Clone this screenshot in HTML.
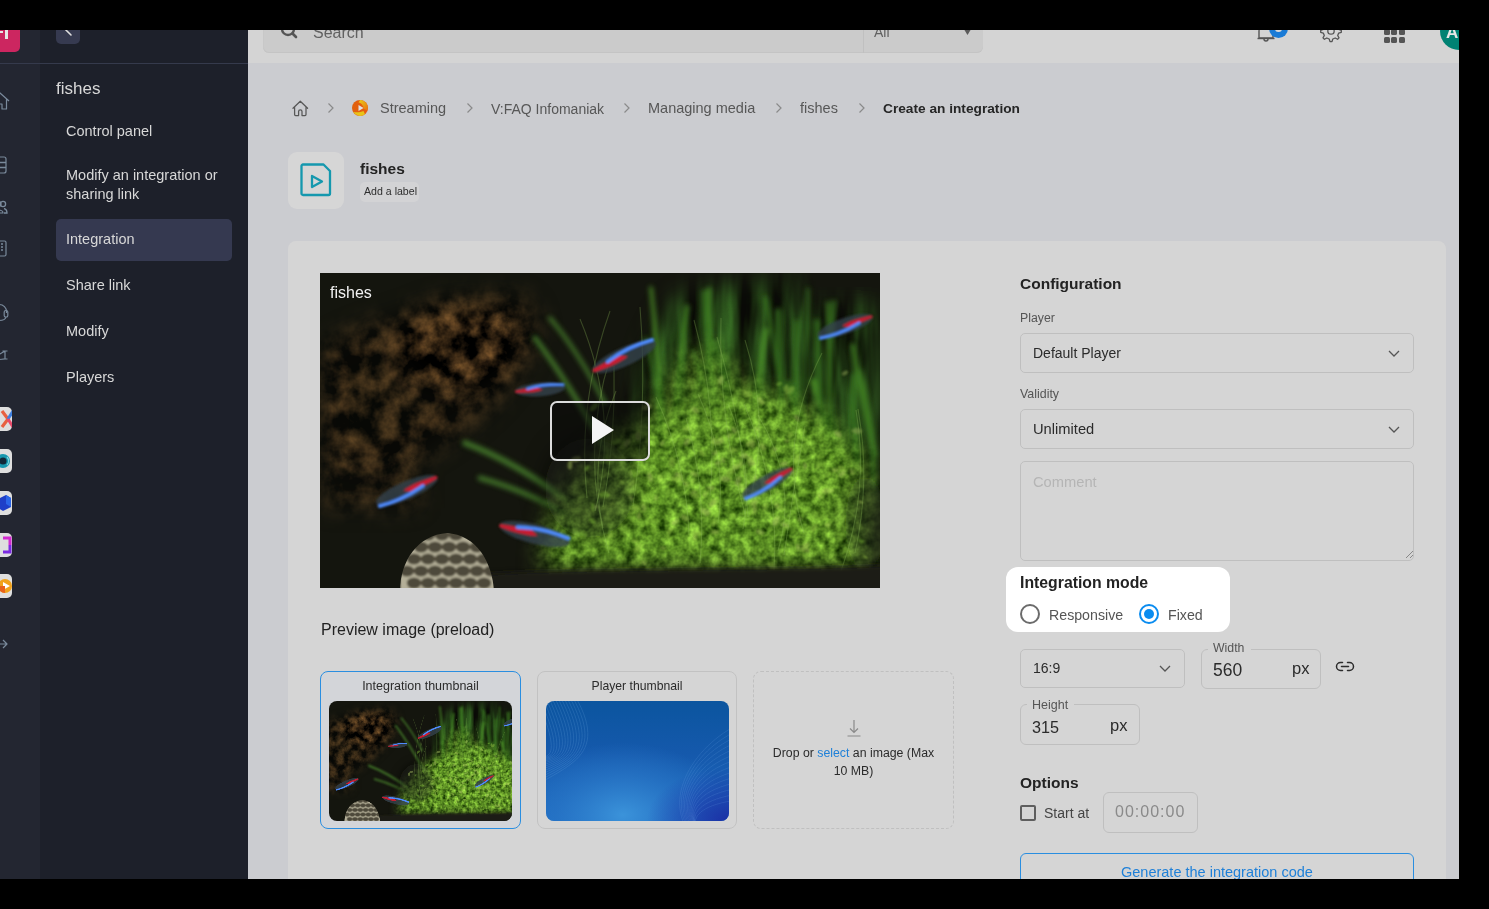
<!DOCTYPE html>
<html><head><meta charset="utf-8">
<style>
*{box-sizing:border-box;margin:0;padding:0}
html,body{width:1489px;height:909px;background:#000;overflow:hidden;font-family:"Liberation Sans",sans-serif;-webkit-font-smoothing:antialiased}
#app{position:absolute;left:0;top:30px;width:1459px;height:849px;overflow:hidden;background:#cbccd0}
.a{will-change:transform}
.a{position:absolute;white-space:nowrap}
svg.a{overflow:visible}
</style></head><body>
<div id="app">
<div class="a" style="left:0px;top:0px;width:40px;height:849px;background:#232631"></div>
<div class="a" style="left:40px;top:0px;width:208px;height:849px;background:#1d202a"></div>
<div class="a" style="left:0px;top:33px;width:248px;height:1px;background:#353a4c"></div>
<div class="a" style="left:-20px;top:-18px;width:40px;height:40px;background:#cc2660;border-radius:5px"></div>
<div class="a" style="left:-4px;top:1px;width:7px;height:2px;background:#e6e6e6"></div>
<div class="a" style="left:5px;top:0px;width:3px;height:9px;background:#e6e6e6"></div>
<div class="a" style="left:56px;top:-12px;width:24px;height:26px;background:#363a50;border-radius:5px"></div>
<svg class="a" style="left:62px;top:-8px;" width="14" height="16" viewBox="0 0 14 16"><path d="M9 3 L4 8 L9 13" fill="none" stroke="#e0e0e0" stroke-width="1.6" stroke-linecap="round"/></svg>
<svg class="a" style="left:-10px;top:62px;" width="20" height="18" viewBox="0 0 20 18"><path d="M1 9 L10 1 L19 9 M3.5 7 V17 H8 V12 H12 V17 H16.5 V7" fill="none" stroke="#7a8a9c" stroke-width="1.2" stroke-linejoin="round"/></svg>
<svg class="a" style="left:-8px;top:126px;" width="15" height="18" viewBox="0 0 15 18"><rect x="1" y="1" width="13" height="16" rx="2" fill="none" stroke="#7a8a9c" stroke-width="1.2"/><path d="M1 6.5 H14 M1 11.5 H14" stroke="#7a8a9c" stroke-width="1.3"/><circle cx="4" cy="4" r=".8" fill="#7a8a9c"/><circle cx="4" cy="9" r=".8" fill="#7a8a9c"/><circle cx="4" cy="14" r=".8" fill="#7a8a9c"/></svg>
<svg class="a" style="left:-8px;top:170px;" width="16" height="14" viewBox="0 0 16 14"><circle cx="6" cy="4" r="3" fill="none" stroke="#7a8a9c" stroke-width="1.2"/><path d="M1 13 C1 9 11 9 11 13 Z" fill="none" stroke="#7a8a9c" stroke-width="1.2"/><circle cx="11" cy="4" r="2.6" fill="none" stroke="#7a8a9c" stroke-width="1.3"/><path d="M12 8.5 C14 9 15 10.5 15 13 H12" fill="none" stroke="#7a8a9c" stroke-width="1.3"/></svg>
<svg class="a" style="left:-8px;top:210px;" width="15" height="17" viewBox="0 0 15 17"><rect x="1" y="1" width="13" height="15" rx="1.5" fill="none" stroke="#7a8a9c" stroke-width="1.2"/><path d="M4 4h2M9 4h2M4 7h2M9 7h2M4 10h2M9 10h2" stroke="#7a8a9c" stroke-width="1.3"/></svg>
<svg class="a" style="left:-10px;top:273px;" width="20" height="20" viewBox="0 0 20 20"><path d="M2.5 10 V8.5 a7 7 0 0 1 14 0 V10" fill="none" stroke="#7a8a9c" stroke-width="1.2"/><rect x="14.2" y="7.5" width="3.6" height="6.5" rx="1.6" fill="none" stroke="#7a8a9c" stroke-width="1.2"/><path d="M16 14 C15.5 16.5 13 17.5 9 17.5" fill="none" stroke="#7a8a9c" stroke-width="1.2"/></svg>
<svg class="a" style="left:-10px;top:319px;" width="20" height="12" viewBox="0 0 20 12"><path d="M0 9 L5 3.5 L9 5.5 M4.5 7 L9 10.5 M15 2 V10 M12.5 2 H17.5 M12.5 10 H17.5 M9 5.5 L15 2 M9 10.5 L15 10" fill="none" stroke="#7a8a9c" stroke-width="1.2" stroke-linejoin="round"/></svg>
<div class="a" style="left:-12px;top:377px;width:24px;height:24px;background:#dedede;border-radius:5px;overflow:hidden"></div>
<svg class="a" style="left:-1px;top:377px;overflow:hidden" width="13" height="24" viewBox="-1 0 13 24"><path d="M2 4 L8 12 L2 20" fill="none" stroke="#e86040" stroke-width="3.2"/><path d="M8 12 L13 4" stroke="#3d7fe0" stroke-width="3"/><path d="M8 12 L13 20" stroke="#e84a6a" stroke-width="3"/></svg>
<div class="a" style="left:-12px;top:419px;width:24px;height:24px;background:#dedede;border-radius:5px;overflow:hidden"></div>
<svg class="a" style="left:-1px;top:419px;overflow:hidden" width="13" height="24" viewBox="-1 0 13 24"><circle cx="3" cy="12" r="7" fill="#1797ae"/><circle cx="3" cy="12" r="3.6" fill="#122838"/><path d="M7 8 a6 6 0 0 1 0 8" stroke="#7fd6e0" stroke-width="1.2" fill="none"/></svg>
<div class="a" style="left:-12px;top:461px;width:24px;height:24px;background:#dedede;border-radius:5px;overflow:hidden"></div>
<svg class="a" style="left:-1px;top:461px;overflow:hidden" width="13" height="24" viewBox="-1 0 13 24"><path d="M-2 8 L6 4 L11 7 L11 16 L3 20 L-2 17Z" fill="#1f3fc8"/><path d="M6 4 L11 7 L11 16 L6 13Z" fill="#2b66e8"/></svg>
<div class="a" style="left:-12px;top:503px;width:24px;height:24px;background:#dedede;border-radius:5px;overflow:hidden"></div>
<svg class="a" style="left:-1px;top:503px;overflow:hidden" width="13" height="24" viewBox="-1 0 13 24"><path d="M3 5 H10 V12" fill="none" stroke="#d22ad0" stroke-width="3"/><path d="M10 12 V19 H3" fill="none" stroke="#7a2ae0" stroke-width="3"/></svg>
<div class="a" style="left:-12px;top:544px;width:24px;height:24px;background:#dedede;border-radius:5px;overflow:hidden"></div>
<svg class="a" style="left:-1px;top:544px;overflow:hidden" width="13" height="24" viewBox="-1 0 13 24"><circle cx="5" cy="12" r="7" fill="#f2a21a"/><path d="M3 8 L10 12 L3 16Z" fill="#fff"/><path d="M-2 12 a7 7 0 0 0 7 7 V12Z" fill="#e8621a"/></svg>
<svg class="a" style="left:-10px;top:606px;" width="20" height="16" viewBox="0 0 20 16"><path d="M6 2 H2 V14 H6 M7 8 H17 M13 4 L17 8 L13 12" fill="none" stroke="#7a8a9c" stroke-width="1.2" stroke-linejoin="round"/></svg>
<div class="a " style="left:56.0px;top:50.2px;font-size:17px;line-height:17px;color:#d8d8d8;font-weight:400;">fishes</div>
<div class="a " style="left:65.5px;top:94.2px;font-size:14.5px;line-height:14.5px;color:#d8d8d8;font-weight:400;">Control panel</div>
<div class="a " style="left:65.5px;top:137.8px;font-size:14.5px;line-height:14.5px;color:#d8d8d8;font-weight:400;">Modify an integration or</div>
<div class="a " style="left:65.5px;top:157.0px;font-size:14.5px;line-height:14.5px;color:#d8d8d8;font-weight:400;">sharing link</div>
<div class="a" style="left:56px;top:189px;width:176px;height:42px;background:#353950;border-radius:5px"></div>
<div class="a " style="left:65.5px;top:201.8px;font-size:14.5px;line-height:14.5px;color:#d8d8d8;font-weight:400;">Integration</div>
<div class="a " style="left:65.5px;top:247.7px;font-size:14.5px;line-height:14.5px;color:#d8d8d8;font-weight:400;">Share link</div>
<div class="a " style="left:65.5px;top:293.7px;font-size:14.5px;line-height:14.5px;color:#d8d8d8;font-weight:400;">Modify</div>
<div class="a " style="left:65.5px;top:339.7px;font-size:14.5px;line-height:14.5px;color:#d8d8d8;font-weight:400;">Players</div>
<div class="a" style="left:248px;top:0px;width:1211px;height:33px;background:#d4d4d4"></div>
<div class="a" style="left:263px;top:-18px;width:720px;height:41px;background:#cbcbcb;border-radius:6px;box-shadow:inset 0 -1px 0 #c4c4c4, inset 1px 0 0 #c8c8c8"></div>
<div class="a" style="left:863px;top:-18px;width:1px;height:41px;background:#c0c0c0"></div>
<svg class="a" style="left:279px;top:-10px;" width="20" height="20" viewBox="0 0 20 20"><circle cx="9" cy="9" r="6" fill="none" stroke="#555" stroke-width="2.4"/><path d="M13.5 13.5 L17 17" stroke="#555" stroke-width="2.6" stroke-linecap="round"/></svg>
<div class="a " style="left:313.4px;top:-5.5px;font-size:16px;line-height:16px;color:#616161;font-weight:400;">Search</div>
<div class="a " style="left:874.2px;top:-5.1px;font-size:14px;line-height:14px;color:#616161;font-weight:400;">All</div>
<svg class="a" style="left:962px;top:-4px;" width="12" height="10" viewBox="0 0 12 10"><path d="M0 0 H11 L5.5 9Z" fill="#5a5a5a"/></svg>
<svg class="a" style="left:1256px;top:-12px;" width="20" height="26" viewBox="0 0 20 26"><path d="M3 20 V13 a7 7 0 0 1 14 0 V20 Z" fill="none" stroke="#555" stroke-width="1.4" stroke-linejoin="round"/><path d="M1.5 20.5 H18.5" stroke="#555" stroke-width="1.4"/><path d="M8 21 a2 2 0 0 0 4 0" fill="none" stroke="#555" stroke-width="1.4"/></svg>
<div class="a" style="left:1269px;top:-11px;width:19px;height:19px;background:#1a7bd6;border-radius:50%"></div>
<div class="a" style="left:1275px;top:-5px;width:7px;height:7px;border:2px solid #d8d8d8;border-radius:50%"></div>
<svg class="a" style="left:1318px;top:-12px;" width="24" height="24" viewBox="0 0 24 24"><path d="M12 3 l2 0 l.8 2.6 l2.4 1 l2.4-1.3 l1.4 1.4 l-1.3 2.4 l1 2.4 l2.6.8 v2 l-2.6.8 l-1 2.4 l1.3 2.4 l-1.4 1.4 l-2.4-1.3 l-2.4 1 l-.8 2.6 h-2 l-.8-2.6 l-2.4-1 l-2.4 1.3 l-1.4-1.4 l1.3-2.4 l-1-2.4 l-2.6-.8 v-2 l2.6-.8 l1-2.4 l-1.3-2.4 l1.4-1.4 l2.4 1.3 l2.4-1 l.8-2.6Z" fill="none" stroke="#555" stroke-width="1.3" stroke-linejoin="round"/><circle cx="13" cy="13" r="3.2" fill="none" stroke="#555" stroke-width="1.3"/></svg>
<div class="a" style="left:1384.0px;top:-8.0px;width:5.5px;height:5.5px;background:#555;border-radius:1.5px"></div>
<div class="a" style="left:1384.0px;top:-0.7px;width:5.5px;height:5.5px;background:#555;border-radius:1.5px"></div>
<div class="a" style="left:1384.0px;top:6.6px;width:5.5px;height:5.5px;background:#555;border-radius:1.5px"></div>
<div class="a" style="left:1391.3px;top:-8.0px;width:5.5px;height:5.5px;background:#555;border-radius:1.5px"></div>
<div class="a" style="left:1391.3px;top:-0.7px;width:5.5px;height:5.5px;background:#555;border-radius:1.5px"></div>
<div class="a" style="left:1391.3px;top:6.6px;width:5.5px;height:5.5px;background:#555;border-radius:1.5px"></div>
<div class="a" style="left:1398.6px;top:-8.0px;width:5.5px;height:5.5px;background:#555;border-radius:1.5px"></div>
<div class="a" style="left:1398.6px;top:-0.7px;width:5.5px;height:5.5px;background:#555;border-radius:1.5px"></div>
<div class="a" style="left:1398.6px;top:6.6px;width:5.5px;height:5.5px;background:#555;border-radius:1.5px"></div>
<div class="a" style="left:1440px;top:-18px;width:38px;height:38px;background:#008273;border-radius:50%"></div>
<div class="a " style="left:1446.0px;top:-5.9px;font-size:17px;line-height:17px;color:#e6e6e6;font-weight:700;">A</div>
<div class="a" style="left:248px;top:33px;width:1211px;height:816px;background:#cbccd0"></div>
<svg class="a" style="left:292px;top:70px;" width="17" height="17" viewBox="0 0 17 17"><path d="M1 8.3 L8.3 1.2 L15.6 8.3 M2.6 6.8 V14.6 a1 1 0 0 0 1 1 H6.6 V11.6 a1.7 1.7 0 0 1 3.4 0 V15.6 H13 a1 1 0 0 0 1 -1 V6.8" fill="none" stroke="#575757" stroke-width="1.25" stroke-linejoin="round" stroke-linecap="round"/></svg>
<svg class="a" style="left:327px;top:71.5px;" width="8" height="12" viewBox="0 0 8 12"><path d="M1.5 1.5 L6 6 L1.5 10.5" fill="none" stroke="#8a8a8a" stroke-width="1.2"/></svg>
<svg class="a" style="left:466px;top:71.5px;" width="8" height="12" viewBox="0 0 8 12"><path d="M1.5 1.5 L6 6 L1.5 10.5" fill="none" stroke="#8a8a8a" stroke-width="1.2"/></svg>
<svg class="a" style="left:623px;top:71.5px;" width="8" height="12" viewBox="0 0 8 12"><path d="M1.5 1.5 L6 6 L1.5 10.5" fill="none" stroke="#8a8a8a" stroke-width="1.2"/></svg>
<svg class="a" style="left:775px;top:71.5px;" width="8" height="12" viewBox="0 0 8 12"><path d="M1.5 1.5 L6 6 L1.5 10.5" fill="none" stroke="#8a8a8a" stroke-width="1.2"/></svg>
<svg class="a" style="left:857.5px;top:71.5px;" width="8" height="12" viewBox="0 0 8 12"><path d="M1.5 1.5 L6 6 L1.5 10.5" fill="none" stroke="#8a8a8a" stroke-width="1.2"/></svg>
<svg class="a" style="left:351px;top:69px;" width="18" height="18" viewBox="0 0 18 18"><defs><linearGradient id="sg1" x1="0" y1="0" x2="1" y2="0"><stop offset="0" stop-color="#e0620e"/><stop offset="1" stop-color="#e85a10"/></linearGradient><linearGradient id="sg2" x1="0" y1="0" x2="1" y2="1"><stop offset="0" stop-color="#e8d018"/><stop offset="1" stop-color="#e87010"/></linearGradient></defs><circle cx="9" cy="9" r="8" fill="url(#sg1)"/><path d="M9 1 A8 8 0 0 1 16.5 11.5 L13 10 C12 6 10 4 7.6 3.6Z" fill="url(#sg2)"/><path d="M2.2 13 A8 8 0 0 0 14 15.2 L12.5 12 C10 13.2 6 13.5 2.2 13Z" fill="#e8c418"/><path d="M7.5 6 L12.6 9 L7.5 12Z" fill="#e2e2e2"/></svg>
<div class="a " style="left:380.3px;top:71.2px;font-size:14.5px;line-height:14.5px;color:#575757;font-weight:400;">Streaming</div>
<div class="a " style="left:490.8px;top:71.6px;font-size:14px;line-height:14px;color:#575757;font-weight:400;">V:FAQ Infomaniak</div>
<div class="a " style="left:648.2px;top:71.2px;font-size:14.5px;line-height:14.5px;color:#575757;font-weight:400;">Managing media</div>
<div class="a " style="left:800.0px;top:71.2px;font-size:14.5px;line-height:14.5px;color:#575757;font-weight:400;">fishes</div>
<div class="a " style="left:882.9px;top:71.9px;font-size:13.7px;line-height:13.7px;color:#262626;font-weight:700;">Create an integration</div>
<div class="a" style="left:288px;top:122px;width:56px;height:57px;background:#d6d6d6;border-radius:9px"></div>
<svg class="a" style="left:300px;top:133px;" width="32" height="34" viewBox="0 0 32 34"><path d="M3 1.5 H23.5 L30 8 V30.5 a1.5 1.5 0 0 1 -1.5 1.5 H3 a1.5 1.5 0 0 1 -1.5 -1.5 V3 a1.5 1.5 0 0 1 1.5 -1.5Z" fill="none" stroke="#1598ae" stroke-width="2.3" stroke-linejoin="round"/><path d="M12 13 L22 18.5 L12 24Z" fill="none" stroke="#1598ae" stroke-width="2.3" stroke-linejoin="round"/></svg>
<div class="a " style="left:360.0px;top:130.8px;font-size:15.5px;line-height:15.5px;color:#232323;font-weight:700;">fishes</div>
<div class="a" style="left:360px;top:152px;width:59px;height:20px;background:#d3d3d5;border-radius:5px"></div>
<div class="a " style="left:364.3px;top:156.2px;font-size:10.6px;line-height:10.6px;color:#2e2e2e;font-weight:400;">Add a label</div>
<div class="a" style="left:288px;top:211px;width:1158px;height:699px;background:#d5d5d5;border-radius:8px"></div>
<svg class="a" style="left:320px;top:243px;overflow:hidden" width="560" height="315" viewBox="0 0 560 315"><defs><filter id="vb12" x="-50%" y="-50%" width="200%" height="200%"><feGaussianBlur stdDeviation="12"/></filter><filter id="vb8" x="-50%" y="-50%" width="200%" height="200%"><feGaussianBlur stdDeviation="8"/></filter><filter id="vb6" x="-50%" y="-50%" width="200%" height="200%"><feGaussianBlur stdDeviation="6"/></filter><filter id="vb3" x="-50%" y="-50%" width="200%" height="200%"><feGaussianBlur stdDeviation="2.6"/></filter><filter id="vb2" x="-50%" y="-50%" width="200%" height="200%"><feGaussianBlur stdDeviation="1.6"/></filter><filter id="vb1" x="-50%" y="-50%" width="200%" height="200%"><feGaussianBlur stdDeviation="0.8"/></filter><filter id="vtp" x="0" y="0" width="100%" height="100%" color-interpolation-filters="sRGB"><feTurbulence type="fractalNoise" baseFrequency="0.095" numOctaves="3" seed="4"/><feColorMatrix type="matrix" values="0.8 0 0 0 -0.04  1.0 0 0 0 0.06  0.4 0 0 0 -0.06  0 0 0 0 1"/></filter><filter id="vtg" x="0" y="0" width="100%" height="100%" color-interpolation-filters="sRGB"><feTurbulence type="fractalNoise" baseFrequency="0.06 0.01" numOctaves="3" seed="2"/><feColorMatrix type="matrix" values="0.5 0 0 0 -0.12  1.05 0 0 0 -0.24  0.35 0 0 0 -0.1  0 0 0 0 1"/></filter><filter id="vtw" x="0" y="0" width="100%" height="100%" color-interpolation-filters="sRGB"><feTurbulence type="fractalNoise" baseFrequency="0.05" numOctaves="4" seed="9"/><feColorMatrix type="matrix" values="0.95 0 0 0 -0.3  0.66 0 0 0 -0.21  0.34 0 0 0 -0.11  0 0 0 0 1"/></filter><mask id="vmp"><g filter="url(#vb12)"><path d="M228 255 C245 200 290 160 340 140 C365 115 400 100 435 115 C485 130 540 160 550 210 L552 296 L222 296Z" fill="#fff"/><path d="M330 150 C345 100 370 70 395 75 C415 85 420 110 425 125Z" fill="#999"/></g></mask><mask id="vmg"><g filter="url(#vb12)"><path d="M350 30 C390 5 470 5 545 15 L560 30 L560 230 L300 220 C300 150 320 80 350 30Z" fill="#8c8c8c"/><path d="M470 -10 L570 -10 L570 40 L470 40Z" fill="#000"/></g></mask><mask id="vmw"><g filter="url(#vb12)"><path d="M0 75 C40 50 110 30 190 22 C220 25 225 55 205 90 C185 125 140 170 70 200 L0 215Z" fill="#9a9a9a"/><ellipse cx="140" cy="70" rx="60" ry="42" fill="#fff"/><path d="M0 195 L100 195 L100 235 L0 235Z" fill="#777"/></g></mask></defs><rect width="560" height="315" fill="#14150e"/><g mask="url(#vmw)"><rect width="560" height="315" filter="url(#vtw)"/></g><g mask="url(#vmg)"><rect width="560" height="315" filter="url(#vtg)"/></g><g filter="url(#vb3)" opacity=".75"><path d="M434 195 Q434 126 446 57" stroke="#54a02c" stroke-width="4.5" fill="none" stroke-linecap="round"/><path d="M515 188 Q506 108 514 29" stroke="#3a7a20" stroke-width="4.3" fill="none" stroke-linecap="round"/><path d="M516 205 Q509 157 493 108" stroke="#54a02c" stroke-width="5.9" fill="none" stroke-linecap="round"/><path d="M480 200 Q486 108 488 16" stroke="#3a7a20" stroke-width="3.1" fill="none" stroke-linecap="round"/><path d="M509 176 Q508 103 508 30" stroke="#468c26" stroke-width="3.7" fill="none" stroke-linecap="round"/><path d="M482 187 Q480 148 468 110" stroke="#3a7a20" stroke-width="6.0" fill="none" stroke-linecap="round"/><path d="M403 168 Q388 93 389 17" stroke="#468c26" stroke-width="5.3" fill="none" stroke-linecap="round"/><path d="M397 155 Q384 117 373 78" stroke="#3a7a20" stroke-width="3.6" fill="none" stroke-linecap="round"/><path d="M555 182 Q541 127 533 73" stroke="#468c26" stroke-width="5.3" fill="none" stroke-linecap="round"/><path d="M402 151 Q389 127 393 102" stroke="#54a02c" stroke-width="3.4" fill="none" stroke-linecap="round"/><path d="M344 214 Q345 140 326 66" stroke="#3a7a20" stroke-width="4.3" fill="none" stroke-linecap="round"/><path d="M507 184 Q498 117 497 49" stroke="#3a7a20" stroke-width="6.0" fill="none" stroke-linecap="round"/><path d="M553 214 Q557 156 540 98" stroke="#468c26" stroke-width="3.6" fill="none" stroke-linecap="round"/><path d="M468 196 Q462 110 445 25" stroke="#3a7a20" stroke-width="4.3" fill="none" stroke-linecap="round"/><path d="M406 174 Q385 96 384 19" stroke="#3a7a20" stroke-width="4.7" fill="none" stroke-linecap="round"/><path d="M415 200 Q412 134 395 69" stroke="#3a7a20" stroke-width="5.5" fill="none" stroke-linecap="round"/><path d="M372 162 Q371 127 383 92" stroke="#3a7a20" stroke-width="3.7" fill="none" stroke-linecap="round"/><path d="M475 194 Q474 122 477 49" stroke="#3a7a20" stroke-width="4.4" fill="none" stroke-linecap="round"/><path d="M354 153 Q359 93 367 34" stroke="#468c26" stroke-width="5.1" fill="none" stroke-linecap="round"/><path d="M538 189 Q531 146 534 103" stroke="#3a7a20" stroke-width="5.9" fill="none" stroke-linecap="round"/><path d="M459 218 Q463 128 458 38" stroke="#3a7a20" stroke-width="5.8" fill="none" stroke-linecap="round"/><path d="M346 183 Q340 99 331 15" stroke="#54a02c" stroke-width="3.8" fill="none" stroke-linecap="round"/><path d="M215 65 Q252.5 115.0 290 185" stroke="#4f9030" stroke-width="5" fill="none" stroke-linecap="round"/><path d="M145 170 Q197.5 190.0 250 230" stroke="#4f9030" stroke-width="6" fill="none" stroke-linecap="round"/><path d="M160 205 Q215.0 220.0 270 255" stroke="#4f9030" stroke-width="5" fill="none" stroke-linecap="round"/><path d="M230 45 Q257.5 77.5 285 130" stroke="#4f9030" stroke-width="4" fill="none" stroke-linecap="round"/></g><g mask="url(#vmp)"><rect width="560" height="315" filter="url(#vtp)"/></g><g filter="url(#vb12)"><ellipse cx="270" cy="215" rx="45" ry="50" fill="#14150e" opacity=".55"/><ellipse cx="545" cy="250" rx="20" ry="50" fill="#14150e" opacity=".5"/></g><g filter="url(#vb1)" opacity=".45"><ellipse cx="456" cy="248" rx="5.4" ry="3.0" transform="rotate(118 456 248)" fill="#a4b860"/><ellipse cx="367" cy="156" rx="4.3" ry="2.3" transform="rotate(166 367 156)" fill="#9cc84a"/><ellipse cx="331" cy="222" rx="5.4" ry="3.0" transform="rotate(4 331 222)" fill="#7db834"/><ellipse cx="345" cy="173" rx="3.5" ry="1.9" transform="rotate(180 345 173)" fill="#7db834"/><ellipse cx="495" cy="242" rx="5.2" ry="2.9" transform="rotate(133 495 242)" fill="#8cc43c"/><ellipse cx="364" cy="133" rx="3.6" ry="2.0" transform="rotate(123 364 133)" fill="#7db834"/><ellipse cx="537" cy="158" rx="5.3" ry="2.9" transform="rotate(5 537 158)" fill="#a4b860"/><ellipse cx="391" cy="215" rx="3.6" ry="2.0" transform="rotate(2 391 215)" fill="#a4b860"/><ellipse cx="436" cy="224" rx="5.5" ry="3.0" transform="rotate(158 436 224)" fill="#8cc43c"/><ellipse cx="394" cy="168" rx="3.9" ry="2.1" transform="rotate(83 394 168)" fill="#b4d060"/><ellipse cx="311" cy="200" rx="2.6" ry="1.4" transform="rotate(108 311 200)" fill="#b4d060"/><ellipse cx="348" cy="219" rx="4.0" ry="2.2" transform="rotate(111 348 219)" fill="#8cc43c"/><ellipse cx="459" cy="197" rx="3.6" ry="2.0" transform="rotate(26 459 197)" fill="#8cc43c"/><ellipse cx="331" cy="178" rx="4.5" ry="2.5" transform="rotate(80 331 178)" fill="#7db834"/><ellipse cx="460" cy="188" rx="3.1" ry="1.7" transform="rotate(78 460 188)" fill="#7db834"/><ellipse cx="466" cy="115" rx="3.7" ry="2.0" transform="rotate(105 466 115)" fill="#9cc84a"/><ellipse cx="387" cy="239" rx="3.6" ry="2.0" transform="rotate(161 387 239)" fill="#a4b860"/><ellipse cx="433" cy="219" rx="5.0" ry="2.7" transform="rotate(20 433 219)" fill="#7db834"/><ellipse cx="443" cy="174" rx="4.0" ry="2.2" transform="rotate(57 443 174)" fill="#b4d060"/><ellipse cx="525" cy="100" rx="3.5" ry="1.9" transform="rotate(149 525 100)" fill="#a4b860"/><ellipse cx="386" cy="280" rx="4.2" ry="2.3" transform="rotate(56 386 280)" fill="#7db834"/><ellipse cx="409" cy="206" rx="3.7" ry="2.0" transform="rotate(34 409 206)" fill="#9cc84a"/><ellipse cx="413" cy="177" rx="4.9" ry="2.7" transform="rotate(177 413 177)" fill="#9cc84a"/><ellipse cx="434" cy="230" rx="4.5" ry="2.5" transform="rotate(145 434 230)" fill="#b4d060"/><ellipse cx="522" cy="196" rx="5.0" ry="2.7" transform="rotate(46 522 196)" fill="#9cc84a"/><ellipse cx="375" cy="137" rx="4.6" ry="2.6" transform="rotate(32 375 137)" fill="#b4d060"/><ellipse cx="395" cy="259" rx="4.0" ry="2.2" transform="rotate(179 395 259)" fill="#b4d060"/><ellipse cx="489" cy="294" rx="2.8" ry="1.5" transform="rotate(168 489 294)" fill="#9cc84a"/><ellipse cx="398" cy="190" rx="3.1" ry="1.7" transform="rotate(160 398 190)" fill="#a4b860"/><ellipse cx="506" cy="218" rx="4.9" ry="2.7" transform="rotate(170 506 218)" fill="#b4d060"/><ellipse cx="292" cy="231" rx="2.8" ry="1.5" transform="rotate(156 292 231)" fill="#9cc84a"/><ellipse cx="459" cy="111" rx="3.1" ry="1.7" transform="rotate(162 459 111)" fill="#8cc43c"/><ellipse cx="267" cy="195" rx="3.3" ry="1.8" transform="rotate(129 267 195)" fill="#7db834"/><ellipse cx="499" cy="221" rx="3.8" ry="2.1" transform="rotate(99 499 221)" fill="#8cc43c"/><ellipse cx="416" cy="160" rx="3.2" ry="1.7" transform="rotate(156 416 160)" fill="#8cc43c"/><ellipse cx="386" cy="221" rx="3.5" ry="1.9" transform="rotate(142 386 221)" fill="#b4d060"/><ellipse cx="434" cy="236" rx="5.2" ry="2.9" transform="rotate(93 434 236)" fill="#b4d060"/><ellipse cx="367" cy="169" rx="4.2" ry="2.3" transform="rotate(124 367 169)" fill="#a4b860"/><ellipse cx="409" cy="163" rx="3.4" ry="1.9" transform="rotate(131 409 163)" fill="#b4d060"/><ellipse cx="342" cy="170" rx="3.3" ry="1.8" transform="rotate(121 342 170)" fill="#b4d060"/><ellipse cx="352" cy="189" rx="5.4" ry="3.0" transform="rotate(94 352 189)" fill="#9cc84a"/><ellipse cx="357" cy="201" rx="2.8" ry="1.6" transform="rotate(1 357 201)" fill="#b4d060"/><ellipse cx="334" cy="257" rx="4.0" ry="2.2" transform="rotate(72 334 257)" fill="#8cc43c"/><ellipse cx="437" cy="156" rx="2.8" ry="1.5" transform="rotate(30 437 156)" fill="#a4b860"/><ellipse cx="485" cy="193" rx="3.3" ry="1.8" transform="rotate(85 485 193)" fill="#a4b860"/><ellipse cx="465" cy="252" rx="4.1" ry="2.2" transform="rotate(20 465 252)" fill="#a4b860"/><ellipse cx="388" cy="221" rx="2.9" ry="1.6" transform="rotate(140 388 221)" fill="#7db834"/><ellipse cx="457" cy="219" rx="2.5" ry="1.4" transform="rotate(51 457 219)" fill="#9cc84a"/><ellipse cx="395" cy="180" rx="2.8" ry="1.5" transform="rotate(132 395 180)" fill="#a4b860"/><ellipse cx="474" cy="255" rx="4.7" ry="2.6" transform="rotate(126 474 255)" fill="#7db834"/><ellipse cx="418" cy="208" rx="5.0" ry="2.7" transform="rotate(111 418 208)" fill="#a4b860"/><ellipse cx="250" cy="192" rx="4.4" ry="2.4" transform="rotate(95 250 192)" fill="#b4d060"/><ellipse cx="470" cy="162" rx="3.2" ry="1.8" transform="rotate(133 470 162)" fill="#9cc84a"/><ellipse cx="469" cy="119" rx="4.3" ry="2.4" transform="rotate(160 469 119)" fill="#7db834"/><ellipse cx="452" cy="293" rx="5.2" ry="2.8" transform="rotate(24 452 293)" fill="#9cc84a"/><ellipse cx="414" cy="292" rx="3.7" ry="2.0" transform="rotate(78 414 292)" fill="#7db834"/><ellipse cx="498" cy="193" rx="3.1" ry="1.7" transform="rotate(113 498 193)" fill="#9cc84a"/><ellipse cx="416" cy="194" rx="4.5" ry="2.5" transform="rotate(164 416 194)" fill="#b4d060"/><ellipse cx="444" cy="210" rx="4.4" ry="2.4" transform="rotate(62 444 210)" fill="#b4d060"/><ellipse cx="435" cy="163" rx="2.6" ry="1.4" transform="rotate(99 435 163)" fill="#8cc43c"/><ellipse cx="302" cy="209" rx="3.1" ry="1.7" transform="rotate(21 302 209)" fill="#9cc84a"/><ellipse cx="427" cy="240" rx="5.3" ry="2.9" transform="rotate(17 427 240)" fill="#7db834"/><ellipse cx="273" cy="234" rx="3.7" ry="2.0" transform="rotate(77 273 234)" fill="#7db834"/><ellipse cx="371" cy="241" rx="2.5" ry="1.4" transform="rotate(126 371 241)" fill="#7db834"/><ellipse cx="433" cy="190" rx="3.6" ry="2.0" transform="rotate(67 433 190)" fill="#a4b860"/><ellipse cx="501" cy="184" rx="4.0" ry="2.2" transform="rotate(3 501 184)" fill="#8cc43c"/><ellipse cx="518" cy="161" rx="4.2" ry="2.3" transform="rotate(34 518 161)" fill="#a4b860"/><ellipse cx="342" cy="193" rx="3.3" ry="1.8" transform="rotate(21 342 193)" fill="#7db834"/><ellipse cx="403" cy="187" rx="2.9" ry="1.6" transform="rotate(59 403 187)" fill="#a4b860"/><ellipse cx="330" cy="204" rx="4.8" ry="2.6" transform="rotate(73 330 204)" fill="#a4b860"/><ellipse cx="400" cy="197" rx="3.4" ry="1.9" transform="rotate(18 400 197)" fill="#7db834"/><ellipse cx="426" cy="206" rx="5.3" ry="2.9" transform="rotate(120 426 206)" fill="#7db834"/><ellipse cx="343" cy="275" rx="3.0" ry="1.7" transform="rotate(14 343 275)" fill="#b4d060"/><ellipse cx="312" cy="210" rx="4.6" ry="2.5" transform="rotate(137 312 210)" fill="#9cc84a"/><ellipse cx="422" cy="214" rx="2.8" ry="1.6" transform="rotate(43 422 214)" fill="#b4d060"/><ellipse cx="316" cy="235" rx="4.4" ry="2.4" transform="rotate(2 316 235)" fill="#9cc84a"/><ellipse cx="402" cy="253" rx="4.2" ry="2.3" transform="rotate(91 402 253)" fill="#7db834"/><ellipse cx="506" cy="202" rx="4.4" ry="2.4" transform="rotate(146 506 202)" fill="#8cc43c"/><ellipse cx="501" cy="245" rx="3.7" ry="2.0" transform="rotate(169 501 245)" fill="#8cc43c"/><ellipse cx="467" cy="168" rx="2.7" ry="1.5" transform="rotate(170 467 168)" fill="#b4d060"/><ellipse cx="319" cy="243" rx="3.4" ry="1.9" transform="rotate(95 319 243)" fill="#b4d060"/><ellipse cx="342" cy="219" rx="4.5" ry="2.5" transform="rotate(135 342 219)" fill="#7db834"/><ellipse cx="541" cy="229" rx="2.6" ry="1.4" transform="rotate(28 541 229)" fill="#b4d060"/><ellipse cx="407" cy="167" rx="4.7" ry="2.6" transform="rotate(9 407 167)" fill="#7db834"/><ellipse cx="323" cy="238" rx="2.6" ry="1.4" transform="rotate(18 323 238)" fill="#9cc84a"/><ellipse cx="470" cy="117" rx="5.4" ry="3.0" transform="rotate(147 470 117)" fill="#9cc84a"/><ellipse cx="374" cy="201" rx="3.8" ry="2.1" transform="rotate(21 374 201)" fill="#b4d060"/><ellipse cx="453" cy="180" rx="2.9" ry="1.6" transform="rotate(80 453 180)" fill="#9cc84a"/><ellipse cx="361" cy="169" rx="4.4" ry="2.4" transform="rotate(123 361 169)" fill="#7db834"/><ellipse cx="318" cy="275" rx="5.4" ry="2.9" transform="rotate(132 318 275)" fill="#9cc84a"/><ellipse cx="408" cy="239" rx="4.9" ry="2.7" transform="rotate(112 408 239)" fill="#7db834"/><ellipse cx="365" cy="245" rx="4.6" ry="2.5" transform="rotate(34 365 245)" fill="#b4d060"/><ellipse cx="394" cy="250" rx="4.0" ry="2.2" transform="rotate(118 394 250)" fill="#9cc84a"/><ellipse cx="445" cy="284" rx="2.5" ry="1.4" transform="rotate(47 445 284)" fill="#8cc43c"/><ellipse cx="427" cy="217" rx="4.1" ry="2.3" transform="rotate(13 427 217)" fill="#9cc84a"/><ellipse cx="508" cy="252" rx="3.2" ry="1.8" transform="rotate(177 508 252)" fill="#b4d060"/><ellipse cx="331" cy="220" rx="3.5" ry="1.9" transform="rotate(134 331 220)" fill="#7db834"/><ellipse cx="422" cy="199" rx="3.8" ry="2.1" transform="rotate(148 422 199)" fill="#8cc43c"/><ellipse cx="477" cy="145" rx="3.8" ry="2.1" transform="rotate(46 477 145)" fill="#a4b860"/><ellipse cx="433" cy="172" rx="3.5" ry="1.9" transform="rotate(99 433 172)" fill="#b4d060"/><ellipse cx="401" cy="107" rx="4.5" ry="2.5" transform="rotate(105 401 107)" fill="#a4b860"/><ellipse cx="336" cy="225" rx="2.7" ry="1.5" transform="rotate(102 336 225)" fill="#b4d060"/><ellipse cx="284" cy="222" rx="5.0" ry="2.7" transform="rotate(2 284 222)" fill="#7db834"/><ellipse cx="307" cy="170" rx="4.7" ry="2.6" transform="rotate(125 307 170)" fill="#a4b860"/><ellipse cx="396" cy="241" rx="4.5" ry="2.5" transform="rotate(59 396 241)" fill="#7db834"/><ellipse cx="464" cy="191" rx="4.2" ry="2.3" transform="rotate(165 464 191)" fill="#a4b860"/><ellipse cx="272" cy="248" rx="3.9" ry="2.1" transform="rotate(40 272 248)" fill="#7db834"/><ellipse cx="532" cy="199" rx="3.2" ry="1.8" transform="rotate(65 532 199)" fill="#b4d060"/><ellipse cx="355" cy="249" rx="4.3" ry="2.3" transform="rotate(143 355 249)" fill="#a4b860"/><ellipse cx="400" cy="169" rx="4.1" ry="2.3" transform="rotate(151 400 169)" fill="#a4b860"/><ellipse cx="359" cy="204" rx="5.1" ry="2.8" transform="rotate(51 359 204)" fill="#a4b860"/><ellipse cx="500" cy="223" rx="3.0" ry="1.6" transform="rotate(53 500 223)" fill="#b4d060"/><ellipse cx="312" cy="245" rx="4.9" ry="2.7" transform="rotate(15 312 245)" fill="#7db834"/><ellipse cx="519" cy="254" rx="2.8" ry="1.5" transform="rotate(114 519 254)" fill="#7db834"/><ellipse cx="487" cy="277" rx="3.2" ry="1.8" transform="rotate(40 487 277)" fill="#a4b860"/><ellipse cx="414" cy="157" rx="3.7" ry="2.0" transform="rotate(61 414 157)" fill="#a4b860"/><ellipse cx="522" cy="201" rx="4.0" ry="2.2" transform="rotate(145 522 201)" fill="#a4b860"/><ellipse cx="505" cy="244" rx="3.7" ry="2.1" transform="rotate(149 505 244)" fill="#8cc43c"/><ellipse cx="327" cy="134" rx="5.0" ry="2.8" transform="rotate(160 327 134)" fill="#a4b860"/><ellipse cx="515" cy="197" rx="3.6" ry="2.0" transform="rotate(2 515 197)" fill="#b4d060"/><ellipse cx="545" cy="284" rx="3.2" ry="1.8" transform="rotate(29 545 284)" fill="#9cc84a"/><ellipse cx="325" cy="160" rx="3.1" ry="1.7" transform="rotate(76 325 160)" fill="#7db834"/><ellipse cx="469" cy="230" rx="3.4" ry="1.9" transform="rotate(28 469 230)" fill="#8cc43c"/><ellipse cx="405" cy="206" rx="5.2" ry="2.9" transform="rotate(7 405 206)" fill="#a4b860"/><ellipse cx="445" cy="234" rx="4.3" ry="2.3" transform="rotate(108 445 234)" fill="#9cc84a"/><ellipse cx="311" cy="225" rx="3.1" ry="1.7" transform="rotate(51 311 225)" fill="#a4b860"/><ellipse cx="468" cy="286" rx="4.4" ry="2.4" transform="rotate(170 468 286)" fill="#7db834"/><ellipse cx="256" cy="186" rx="5.2" ry="2.8" transform="rotate(165 256 186)" fill="#a4b860"/><ellipse cx="350" cy="266" rx="3.9" ry="2.2" transform="rotate(40 350 266)" fill="#8cc43c"/><ellipse cx="430" cy="170" rx="4.9" ry="2.7" transform="rotate(139 430 170)" fill="#b4d060"/><ellipse cx="411" cy="199" rx="5.2" ry="2.8" transform="rotate(157 411 199)" fill="#9cc84a"/><ellipse cx="477" cy="186" rx="4.6" ry="2.6" transform="rotate(109 477 186)" fill="#9cc84a"/><ellipse cx="431" cy="238" rx="2.9" ry="1.6" transform="rotate(163 431 238)" fill="#7db834"/><ellipse cx="421" cy="191" rx="3.3" ry="1.8" transform="rotate(96 421 191)" fill="#b4d060"/><ellipse cx="485" cy="282" rx="3.1" ry="1.7" transform="rotate(165 485 282)" fill="#8cc43c"/><ellipse cx="430" cy="235" rx="3.3" ry="1.8" transform="rotate(129 430 235)" fill="#7db834"/><ellipse cx="480" cy="246" rx="2.7" ry="1.5" transform="rotate(135 480 246)" fill="#a4b860"/><ellipse cx="314" cy="200" rx="4.9" ry="2.7" transform="rotate(75 314 200)" fill="#8cc43c"/><ellipse cx="435" cy="205" rx="3.1" ry="1.7" transform="rotate(98 435 205)" fill="#a4b860"/><ellipse cx="359" cy="210" rx="3.4" ry="1.9" transform="rotate(73 359 210)" fill="#7db834"/><ellipse cx="390" cy="199" rx="4.6" ry="2.5" transform="rotate(19 390 199)" fill="#8cc43c"/><ellipse cx="335" cy="248" rx="4.5" ry="2.5" transform="rotate(2 335 248)" fill="#8cc43c"/><ellipse cx="315" cy="268" rx="3.4" ry="1.9" transform="rotate(20 315 268)" fill="#9cc84a"/><ellipse cx="427" cy="121" rx="5.2" ry="2.9" transform="rotate(27 427 121)" fill="#9cc84a"/><ellipse cx="274" cy="134" rx="5.4" ry="2.9" transform="rotate(136 274 134)" fill="#7db834"/><ellipse cx="373" cy="208" rx="3.1" ry="1.7" transform="rotate(132 373 208)" fill="#9cc84a"/><ellipse cx="287" cy="185" rx="3.8" ry="2.1" transform="rotate(69 287 185)" fill="#7db834"/><ellipse cx="494" cy="255" rx="4.5" ry="2.5" transform="rotate(127 494 255)" fill="#9cc84a"/><ellipse cx="440" cy="259" rx="4.3" ry="2.4" transform="rotate(16 440 259)" fill="#a4b860"/><ellipse cx="412" cy="243" rx="3.8" ry="2.1" transform="rotate(139 412 243)" fill="#8cc43c"/><ellipse cx="324" cy="290" rx="2.9" ry="1.6" transform="rotate(37 324 290)" fill="#b4d060"/><ellipse cx="478" cy="274" rx="3.5" ry="1.9" transform="rotate(74 478 274)" fill="#a4b860"/><ellipse cx="486" cy="220" rx="5.4" ry="3.0" transform="rotate(142 486 220)" fill="#7db834"/><ellipse cx="346" cy="159" rx="3.3" ry="1.8" transform="rotate(34 346 159)" fill="#8cc43c"/><ellipse cx="375" cy="264" rx="3.6" ry="2.0" transform="rotate(92 375 264)" fill="#b4d060"/><ellipse cx="441" cy="128" rx="4.6" ry="2.6" transform="rotate(46 441 128)" fill="#b4d060"/><ellipse cx="340" cy="205" rx="3.6" ry="2.0" transform="rotate(90 340 205)" fill="#9cc84a"/><ellipse cx="485" cy="274" rx="5.5" ry="3.0" transform="rotate(127 485 274)" fill="#b4d060"/><ellipse cx="500" cy="191" rx="4.4" ry="2.4" transform="rotate(36 500 191)" fill="#8cc43c"/><ellipse cx="457" cy="233" rx="3.8" ry="2.1" transform="rotate(60 457 233)" fill="#b4d060"/><ellipse cx="541" cy="268" rx="3.9" ry="2.1" transform="rotate(22 541 268)" fill="#7db834"/><ellipse cx="448" cy="211" rx="4.1" ry="2.3" transform="rotate(101 448 211)" fill="#b4d060"/><ellipse cx="347" cy="201" rx="4.3" ry="2.4" transform="rotate(22 347 201)" fill="#7db834"/><ellipse cx="435" cy="180" rx="3.2" ry="1.8" transform="rotate(103 435 180)" fill="#7db834"/><ellipse cx="430" cy="188" rx="4.9" ry="2.7" transform="rotate(82 430 188)" fill="#b4d060"/><ellipse cx="290" cy="263" rx="3.4" ry="1.9" transform="rotate(121 290 263)" fill="#9cc84a"/><ellipse cx="399" cy="168" rx="4.4" ry="2.4" transform="rotate(137 399 168)" fill="#b4d060"/><ellipse cx="450" cy="257" rx="2.9" ry="1.6" transform="rotate(70 450 257)" fill="#8cc43c"/><ellipse cx="360" cy="202" rx="2.9" ry="1.6" transform="rotate(44 360 202)" fill="#b4d060"/><ellipse cx="429" cy="208" rx="4.7" ry="2.6" transform="rotate(142 429 208)" fill="#8cc43c"/><ellipse cx="328" cy="247" rx="3.9" ry="2.2" transform="rotate(74 328 247)" fill="#8cc43c"/><ellipse cx="318" cy="163" rx="4.8" ry="2.6" transform="rotate(87 318 163)" fill="#a4b860"/><ellipse cx="455" cy="176" rx="2.9" ry="1.6" transform="rotate(21 455 176)" fill="#a4b860"/><ellipse cx="471" cy="199" rx="3.8" ry="2.1" transform="rotate(163 471 199)" fill="#b4d060"/><ellipse cx="393" cy="230" rx="5.2" ry="2.9" transform="rotate(132 393 230)" fill="#b4d060"/><ellipse cx="296" cy="169" rx="5.1" ry="2.8" transform="rotate(158 296 169)" fill="#7db834"/><ellipse cx="495" cy="206" rx="4.1" ry="2.2" transform="rotate(43 495 206)" fill="#8cc43c"/><ellipse cx="377" cy="260" rx="5.1" ry="2.8" transform="rotate(180 377 260)" fill="#9cc84a"/><ellipse cx="385" cy="118" rx="5.1" ry="2.8" transform="rotate(76 385 118)" fill="#7db834"/><ellipse cx="424" cy="183" rx="4.2" ry="2.3" transform="rotate(163 424 183)" fill="#a4b860"/><ellipse cx="521" cy="264" rx="5.1" ry="2.8" transform="rotate(104 521 264)" fill="#8cc43c"/><ellipse cx="341" cy="227" rx="2.6" ry="1.4" transform="rotate(31 341 227)" fill="#7db834"/><ellipse cx="324" cy="234" rx="3.7" ry="2.0" transform="rotate(64 324 234)" fill="#b4d060"/><ellipse cx="384" cy="207" rx="3.9" ry="2.1" transform="rotate(56 384 207)" fill="#8cc43c"/><ellipse cx="385" cy="239" rx="5.1" ry="2.8" transform="rotate(36 385 239)" fill="#a4b860"/><ellipse cx="483" cy="158" rx="3.1" ry="1.7" transform="rotate(151 483 158)" fill="#8cc43c"/><ellipse cx="350" cy="258" rx="4.4" ry="2.4" transform="rotate(126 350 258)" fill="#9cc84a"/><ellipse cx="313" cy="193" rx="3.1" ry="1.7" transform="rotate(158 313 193)" fill="#9cc84a"/><ellipse cx="441" cy="222" rx="5.4" ry="3.0" transform="rotate(49 441 222)" fill="#7db834"/><ellipse cx="261" cy="262" rx="4.6" ry="2.5" transform="rotate(169 261 262)" fill="#7db834"/><ellipse cx="374" cy="222" rx="5.1" ry="2.8" transform="rotate(22 374 222)" fill="#9cc84a"/><ellipse cx="382" cy="180" rx="4.0" ry="2.2" transform="rotate(53 382 180)" fill="#9cc84a"/><ellipse cx="366" cy="211" rx="3.2" ry="1.8" transform="rotate(54 366 211)" fill="#b4d060"/><ellipse cx="511" cy="183" rx="2.9" ry="1.6" transform="rotate(120 511 183)" fill="#7db834"/><ellipse cx="374" cy="219" rx="2.7" ry="1.5" transform="rotate(163 374 219)" fill="#b4d060"/><ellipse cx="511" cy="218" rx="3.3" ry="1.8" transform="rotate(145 511 218)" fill="#b4d060"/><ellipse cx="461" cy="235" rx="3.2" ry="1.8" transform="rotate(50 461 235)" fill="#9cc84a"/><ellipse cx="356" cy="206" rx="5.5" ry="3.0" transform="rotate(6 356 206)" fill="#9cc84a"/><ellipse cx="276" cy="234" rx="2.5" ry="1.4" transform="rotate(160 276 234)" fill="#a4b860"/></g><path d="M267 225 Q257 131 290 38" stroke="#90b858" stroke-width="1.1" fill="none" opacity=".3"/><path d="M390 223 Q398 135 374 47" stroke="#90b858" stroke-width="1.1" fill="none" opacity=".3"/><path d="M535 280 Q551 208 538 136" stroke="#90b858" stroke-width="1.1" fill="none" opacity=".3"/><path d="M283 255 Q268 186 296 118" stroke="#90b858" stroke-width="1.1" fill="none" opacity=".3"/><path d="M458 278 Q479 210 438 142" stroke="#90b858" stroke-width="1.1" fill="none" opacity=".3"/><path d="M425 241 Q398 143 401 45" stroke="#90b858" stroke-width="1.1" fill="none" opacity=".3"/><path d="M380 290 Q387 218 366 145" stroke="#90b858" stroke-width="1.1" fill="none" opacity=".3"/><path d="M484 260 Q456 170 502 80" stroke="#90b858" stroke-width="1.1" fill="none" opacity=".3"/><path d="M283 234 Q296 164 294 93" stroke="#90b858" stroke-width="1.1" fill="none" opacity=".3"/><path d="M431 224 Q450 146 425 67" stroke="#90b858" stroke-width="1.1" fill="none" opacity=".3"/><path d="M464 282 Q473 218 485 153" stroke="#90b858" stroke-width="1.1" fill="none" opacity=".3"/><path d="M398 250 Q408 186 378 121" stroke="#90b858" stroke-width="1.1" fill="none" opacity=".3"/><path d="M423 256 Q435 194 408 131" stroke="#90b858" stroke-width="1.1" fill="none" opacity=".3"/><path d="M454 297 Q460 214 424 131" stroke="#90b858" stroke-width="1.1" fill="none" opacity=".3"/><path d="M289 280 Q259 181 291 82" stroke="#90b858" stroke-width="1.1" fill="none" opacity=".3"/><path d="M369 262 Q367 193 336 124" stroke="#90b858" stroke-width="1.1" fill="none" opacity=".3"/><path d="M521 298 Q550 218 536 137" stroke="#90b858" stroke-width="1.1" fill="none" opacity=".3"/><path d="M428 244 Q423 154 397 64" stroke="#90b858" stroke-width="1.1" fill="none" opacity=".3"/><path d="M275 238 Q300 142 260 46" stroke="#90b858" stroke-width="1.1" fill="none" opacity=".3"/><path d="M313 233 Q328 133 320 34" stroke="#90b858" stroke-width="1.1" fill="none" opacity=".3"/><g filter="url(#vb3)"><path d="M150 302 C250 294 420 298 570 292 L570 330 L150 330Z" fill="#1c1c18"/></g><clipPath id="vrc"><path d="M80 318 C80 288 98 262 127 260 C156 262 172 288 174 318Z"/></clipPath><g filter="url(#vb1)" clip-path="url(#vrc)"><rect x="80" y="255" width="95" height="65" fill="#b4af98"/><g><ellipse cx="108" cy="262" rx="7.2" ry="5.6" fill="#4e4a3a"/><ellipse cx="122" cy="262" rx="7.2" ry="5.6" fill="#4e4a3a"/><ellipse cx="136" cy="262" rx="7.2" ry="5.6" fill="#4e4a3a"/><ellipse cx="101" cy="274" rx="7.2" ry="5.6" fill="#4e4a3a"/><ellipse cx="115" cy="274" rx="7.2" ry="5.6" fill="#4e4a3a"/><ellipse cx="129" cy="274" rx="7.2" ry="5.6" fill="#4e4a3a"/><ellipse cx="143" cy="274" rx="7.2" ry="5.6" fill="#4e4a3a"/><ellipse cx="157" cy="274" rx="7.2" ry="5.6" fill="#4e4a3a"/><ellipse cx="94" cy="286" rx="7.2" ry="5.6" fill="#4e4a3a"/><ellipse cx="108" cy="286" rx="7.2" ry="5.6" fill="#4e4a3a"/><ellipse cx="122" cy="286" rx="7.2" ry="5.6" fill="#4e4a3a"/><ellipse cx="136" cy="286" rx="7.2" ry="5.6" fill="#4e4a3a"/><ellipse cx="150" cy="286" rx="7.2" ry="5.6" fill="#4e4a3a"/><ellipse cx="164" cy="286" rx="7.2" ry="5.6" fill="#4e4a3a"/><ellipse cx="87" cy="298" rx="7.2" ry="5.6" fill="#4e4a3a"/><ellipse cx="101" cy="298" rx="7.2" ry="5.6" fill="#4e4a3a"/><ellipse cx="115" cy="298" rx="7.2" ry="5.6" fill="#4e4a3a"/><ellipse cx="129" cy="298" rx="7.2" ry="5.6" fill="#4e4a3a"/><ellipse cx="143" cy="298" rx="7.2" ry="5.6" fill="#4e4a3a"/><ellipse cx="157" cy="298" rx="7.2" ry="5.6" fill="#4e4a3a"/><ellipse cx="171" cy="298" rx="7.2" ry="5.6" fill="#4e4a3a"/><ellipse cx="94" cy="310" rx="7.2" ry="5.6" fill="#4e4a3a"/><ellipse cx="108" cy="310" rx="7.2" ry="5.6" fill="#4e4a3a"/><ellipse cx="122" cy="310" rx="7.2" ry="5.6" fill="#4e4a3a"/><ellipse cx="136" cy="310" rx="7.2" ry="5.6" fill="#4e4a3a"/><ellipse cx="150" cy="310" rx="7.2" ry="5.6" fill="#4e4a3a"/><ellipse cx="164" cy="310" rx="7.2" ry="5.6" fill="#4e4a3a"/></g></g><g filter="url(#vb1)"><g transform="translate(303.5 82.0) rotate(-24.0)"><ellipse cx="0" cy="1.9" rx="34.5" ry="9.3" fill="#34424e" opacity=".8"/><path d="M-34.5 3.7 Q-6.9 6.5 3.4 2.8 L-3.4 -0.9 Q-20.7 -0.9 -34.5 0.9Z" fill="#c81e30"/><path d="M-17.2 -0.4 Q6.9 -6.0 32.4 -2.2" stroke="#4f8cff" stroke-width="3.7" fill="none" stroke-linecap="round"/></g><g transform="translate(220.0 115.0) rotate(-4.6)"><ellipse cx="0" cy="1.4" rx="25.1" ry="6.8" fill="#34424e" opacity=".8"/><path d="M-25.1 2.7 Q-5.0 4.7 2.5 2.0 L-2.5 -0.7 Q-15.0 -0.7 -25.1 0.7Z" fill="#c81e30"/><path d="M-12.5 -0.3 Q5.0 -4.3 23.6 -1.6" stroke="#4f8cff" stroke-width="2.7" fill="none" stroke-linecap="round"/></g><g transform="translate(87.5 219.0) rotate(156.9)"><ellipse cx="0" cy="1.8" rx="33.2" ry="9.0" fill="#34424e" opacity=".8"/><path d="M-33.2 3.6 Q-6.6 6.3 3.3 2.7 L-3.3 -0.9 Q-19.9 -0.9 -33.2 0.9Z" fill="#c81e30"/><path d="M-16.6 -0.4 Q6.6 -5.7 31.2 -2.1" stroke="#4f8cff" stroke-width="3.6" fill="none" stroke-linecap="round"/></g><g transform="translate(215.0 259.0) rotate(14.4)"><ellipse cx="0" cy="2.0" rx="36.1" ry="9.8" fill="#34424e" opacity=".8"/><path d="M-36.1 3.9 Q-7.2 6.8 3.6 2.9 L-3.6 -1.0 Q-21.7 -1.0 -36.1 1.0Z" fill="#c81e30"/><path d="M-18.1 -0.4 Q7.2 -6.2 34.0 -2.3" stroke="#4f8cff" stroke-width="3.9" fill="none" stroke-linecap="round"/></g><g transform="translate(448.0 211.0) rotate(150.8)"><ellipse cx="0" cy="1.5" rx="28.7" ry="7.7" fill="#34424e" opacity=".8"/><path d="M-28.7 3.1 Q-5.7 5.4 2.9 2.3 L-2.9 -0.8 Q-17.2 -0.8 -28.7 0.8Z" fill="#c81e30"/><path d="M-14.3 -0.3 Q5.7 -5.0 26.9 -1.9" stroke="#4f8cff" stroke-width="3.1" fill="none" stroke-linecap="round"/></g><g transform="translate(525.5 54.5) rotate(160.9)"><ellipse cx="0" cy="1.6" rx="29.1" ry="7.9" fill="#34424e" opacity=".8"/><path d="M-29.1 3.1 Q-5.8 5.5 2.9 2.4 L-2.9 -0.8 Q-17.5 -0.8 -29.1 0.8Z" fill="#c81e30"/><path d="M-14.5 -0.3 Q5.8 -5.0 27.3 -1.9" stroke="#4f8cff" stroke-width="3.1" fill="none" stroke-linecap="round"/></g></g></svg>
<div class="a " style="left:329.8px;top:254.9px;font-size:16px;line-height:16px;color:#f2f2f2;font-weight:400;">fishes</div>
<div class="a" style="left:550px;top:371px;width:100px;height:60px;background:rgba(10,10,10,.55);border:2px solid #dcdcdc;border-radius:7px"></div>
<svg class="a" style="left:590px;top:384px;" width="26" height="32" viewBox="0 0 26 32"><path d="M2 2 L24 16 L2 30Z" fill="#f4f4f4"/></svg>
<div class="a " style="left:320.5px;top:591.7px;font-size:16px;line-height:16px;color:#222;font-weight:400;">Preview image (preload)</div>
<div class="a" style="left:320px;top:641px;width:201px;height:158px;background:#d3d5d9;border:1.5px solid #2a8ee0;border-radius:8px"></div>
<div class="a" style="left:537px;top:641px;width:200px;height:158px;background:#d5d5d5;border:1px solid #c2c2c2;border-radius:8px"></div>
<div class="a" style="left:753px;top:641px;width:201px;height:158px;border:1px dashed #c0c0c0;border-radius:8px"></div>
<div class="a" style="left:320px;top:649px;width:201px;text-align:center;font-size:12.5px;line-height:14px;color:#2b2b2b">Integration thumbnail</div>
<div class="a" style="left:537px;top:649px;width:200px;text-align:center;font-size:12.2px;line-height:14px;color:#2b2b2b">Player thumbnail</div>
<div class="a" style="left:329px;top:671px;width:183px;height:120px;border-radius:8px;overflow:hidden"><svg width="183" height="120" viewBox="0 0 560 315" preserveAspectRatio="xMidYMid slice"><defs><filter id="tb12" x="-50%" y="-50%" width="200%" height="200%"><feGaussianBlur stdDeviation="12"/></filter><filter id="tb8" x="-50%" y="-50%" width="200%" height="200%"><feGaussianBlur stdDeviation="8"/></filter><filter id="tb6" x="-50%" y="-50%" width="200%" height="200%"><feGaussianBlur stdDeviation="6"/></filter><filter id="tb3" x="-50%" y="-50%" width="200%" height="200%"><feGaussianBlur stdDeviation="2.6"/></filter><filter id="tb2" x="-50%" y="-50%" width="200%" height="200%"><feGaussianBlur stdDeviation="1.6"/></filter><filter id="tb1" x="-50%" y="-50%" width="200%" height="200%"><feGaussianBlur stdDeviation="0.8"/></filter><filter id="ttp" x="0" y="0" width="100%" height="100%" color-interpolation-filters="sRGB"><feTurbulence type="fractalNoise" baseFrequency="0.095" numOctaves="3" seed="4"/><feColorMatrix type="matrix" values="0.8 0 0 0 -0.04  1.0 0 0 0 0.06  0.4 0 0 0 -0.06  0 0 0 0 1"/></filter><filter id="ttg" x="0" y="0" width="100%" height="100%" color-interpolation-filters="sRGB"><feTurbulence type="fractalNoise" baseFrequency="0.06 0.01" numOctaves="3" seed="2"/><feColorMatrix type="matrix" values="0.5 0 0 0 -0.12  1.05 0 0 0 -0.24  0.35 0 0 0 -0.1  0 0 0 0 1"/></filter><filter id="ttw" x="0" y="0" width="100%" height="100%" color-interpolation-filters="sRGB"><feTurbulence type="fractalNoise" baseFrequency="0.05" numOctaves="4" seed="9"/><feColorMatrix type="matrix" values="0.95 0 0 0 -0.3  0.66 0 0 0 -0.21  0.34 0 0 0 -0.11  0 0 0 0 1"/></filter><mask id="tmp"><g filter="url(#tb12)"><path d="M228 255 C245 200 290 160 340 140 C365 115 400 100 435 115 C485 130 540 160 550 210 L552 296 L222 296Z" fill="#fff"/><path d="M330 150 C345 100 370 70 395 75 C415 85 420 110 425 125Z" fill="#999"/></g></mask><mask id="tmg"><g filter="url(#tb12)"><path d="M350 30 C390 5 470 5 545 15 L560 30 L560 230 L300 220 C300 150 320 80 350 30Z" fill="#8c8c8c"/><path d="M470 -10 L570 -10 L570 40 L470 40Z" fill="#000"/></g></mask><mask id="tmw"><g filter="url(#tb12)"><path d="M0 75 C40 50 110 30 190 22 C220 25 225 55 205 90 C185 125 140 170 70 200 L0 215Z" fill="#9a9a9a"/><ellipse cx="140" cy="70" rx="60" ry="42" fill="#fff"/><path d="M0 195 L100 195 L100 235 L0 235Z" fill="#777"/></g></mask></defs><rect width="560" height="315" fill="#14150e"/><g mask="url(#tmw)"><rect width="560" height="315" filter="url(#ttw)"/></g><g mask="url(#tmg)"><rect width="560" height="315" filter="url(#ttg)"/></g><g filter="url(#tb3)" opacity=".75"><path d="M434 195 Q434 126 446 57" stroke="#54a02c" stroke-width="4.5" fill="none" stroke-linecap="round"/><path d="M515 188 Q506 108 514 29" stroke="#3a7a20" stroke-width="4.3" fill="none" stroke-linecap="round"/><path d="M516 205 Q509 157 493 108" stroke="#54a02c" stroke-width="5.9" fill="none" stroke-linecap="round"/><path d="M480 200 Q486 108 488 16" stroke="#3a7a20" stroke-width="3.1" fill="none" stroke-linecap="round"/><path d="M509 176 Q508 103 508 30" stroke="#468c26" stroke-width="3.7" fill="none" stroke-linecap="round"/><path d="M482 187 Q480 148 468 110" stroke="#3a7a20" stroke-width="6.0" fill="none" stroke-linecap="round"/><path d="M403 168 Q388 93 389 17" stroke="#468c26" stroke-width="5.3" fill="none" stroke-linecap="round"/><path d="M397 155 Q384 117 373 78" stroke="#3a7a20" stroke-width="3.6" fill="none" stroke-linecap="round"/><path d="M555 182 Q541 127 533 73" stroke="#468c26" stroke-width="5.3" fill="none" stroke-linecap="round"/><path d="M402 151 Q389 127 393 102" stroke="#54a02c" stroke-width="3.4" fill="none" stroke-linecap="round"/><path d="M344 214 Q345 140 326 66" stroke="#3a7a20" stroke-width="4.3" fill="none" stroke-linecap="round"/><path d="M507 184 Q498 117 497 49" stroke="#3a7a20" stroke-width="6.0" fill="none" stroke-linecap="round"/><path d="M553 214 Q557 156 540 98" stroke="#468c26" stroke-width="3.6" fill="none" stroke-linecap="round"/><path d="M468 196 Q462 110 445 25" stroke="#3a7a20" stroke-width="4.3" fill="none" stroke-linecap="round"/><path d="M406 174 Q385 96 384 19" stroke="#3a7a20" stroke-width="4.7" fill="none" stroke-linecap="round"/><path d="M415 200 Q412 134 395 69" stroke="#3a7a20" stroke-width="5.5" fill="none" stroke-linecap="round"/><path d="M372 162 Q371 127 383 92" stroke="#3a7a20" stroke-width="3.7" fill="none" stroke-linecap="round"/><path d="M475 194 Q474 122 477 49" stroke="#3a7a20" stroke-width="4.4" fill="none" stroke-linecap="round"/><path d="M354 153 Q359 93 367 34" stroke="#468c26" stroke-width="5.1" fill="none" stroke-linecap="round"/><path d="M538 189 Q531 146 534 103" stroke="#3a7a20" stroke-width="5.9" fill="none" stroke-linecap="round"/><path d="M459 218 Q463 128 458 38" stroke="#3a7a20" stroke-width="5.8" fill="none" stroke-linecap="round"/><path d="M346 183 Q340 99 331 15" stroke="#54a02c" stroke-width="3.8" fill="none" stroke-linecap="round"/><path d="M215 65 Q252.5 115.0 290 185" stroke="#4f9030" stroke-width="5" fill="none" stroke-linecap="round"/><path d="M145 170 Q197.5 190.0 250 230" stroke="#4f9030" stroke-width="6" fill="none" stroke-linecap="round"/><path d="M160 205 Q215.0 220.0 270 255" stroke="#4f9030" stroke-width="5" fill="none" stroke-linecap="round"/><path d="M230 45 Q257.5 77.5 285 130" stroke="#4f9030" stroke-width="4" fill="none" stroke-linecap="round"/></g><g mask="url(#tmp)"><rect width="560" height="315" filter="url(#ttp)"/></g><g filter="url(#tb12)"><ellipse cx="270" cy="215" rx="45" ry="50" fill="#14150e" opacity=".55"/><ellipse cx="545" cy="250" rx="20" ry="50" fill="#14150e" opacity=".5"/></g><g filter="url(#tb1)" opacity=".45"><ellipse cx="456" cy="248" rx="5.4" ry="3.0" transform="rotate(118 456 248)" fill="#a4b860"/><ellipse cx="367" cy="156" rx="4.3" ry="2.3" transform="rotate(166 367 156)" fill="#9cc84a"/><ellipse cx="331" cy="222" rx="5.4" ry="3.0" transform="rotate(4 331 222)" fill="#7db834"/><ellipse cx="345" cy="173" rx="3.5" ry="1.9" transform="rotate(180 345 173)" fill="#7db834"/><ellipse cx="495" cy="242" rx="5.2" ry="2.9" transform="rotate(133 495 242)" fill="#8cc43c"/><ellipse cx="364" cy="133" rx="3.6" ry="2.0" transform="rotate(123 364 133)" fill="#7db834"/><ellipse cx="537" cy="158" rx="5.3" ry="2.9" transform="rotate(5 537 158)" fill="#a4b860"/><ellipse cx="391" cy="215" rx="3.6" ry="2.0" transform="rotate(2 391 215)" fill="#a4b860"/><ellipse cx="436" cy="224" rx="5.5" ry="3.0" transform="rotate(158 436 224)" fill="#8cc43c"/><ellipse cx="394" cy="168" rx="3.9" ry="2.1" transform="rotate(83 394 168)" fill="#b4d060"/><ellipse cx="311" cy="200" rx="2.6" ry="1.4" transform="rotate(108 311 200)" fill="#b4d060"/><ellipse cx="348" cy="219" rx="4.0" ry="2.2" transform="rotate(111 348 219)" fill="#8cc43c"/><ellipse cx="459" cy="197" rx="3.6" ry="2.0" transform="rotate(26 459 197)" fill="#8cc43c"/><ellipse cx="331" cy="178" rx="4.5" ry="2.5" transform="rotate(80 331 178)" fill="#7db834"/><ellipse cx="460" cy="188" rx="3.1" ry="1.7" transform="rotate(78 460 188)" fill="#7db834"/><ellipse cx="466" cy="115" rx="3.7" ry="2.0" transform="rotate(105 466 115)" fill="#9cc84a"/><ellipse cx="387" cy="239" rx="3.6" ry="2.0" transform="rotate(161 387 239)" fill="#a4b860"/><ellipse cx="433" cy="219" rx="5.0" ry="2.7" transform="rotate(20 433 219)" fill="#7db834"/><ellipse cx="443" cy="174" rx="4.0" ry="2.2" transform="rotate(57 443 174)" fill="#b4d060"/><ellipse cx="525" cy="100" rx="3.5" ry="1.9" transform="rotate(149 525 100)" fill="#a4b860"/><ellipse cx="386" cy="280" rx="4.2" ry="2.3" transform="rotate(56 386 280)" fill="#7db834"/><ellipse cx="409" cy="206" rx="3.7" ry="2.0" transform="rotate(34 409 206)" fill="#9cc84a"/><ellipse cx="413" cy="177" rx="4.9" ry="2.7" transform="rotate(177 413 177)" fill="#9cc84a"/><ellipse cx="434" cy="230" rx="4.5" ry="2.5" transform="rotate(145 434 230)" fill="#b4d060"/><ellipse cx="522" cy="196" rx="5.0" ry="2.7" transform="rotate(46 522 196)" fill="#9cc84a"/><ellipse cx="375" cy="137" rx="4.6" ry="2.6" transform="rotate(32 375 137)" fill="#b4d060"/><ellipse cx="395" cy="259" rx="4.0" ry="2.2" transform="rotate(179 395 259)" fill="#b4d060"/><ellipse cx="489" cy="294" rx="2.8" ry="1.5" transform="rotate(168 489 294)" fill="#9cc84a"/><ellipse cx="398" cy="190" rx="3.1" ry="1.7" transform="rotate(160 398 190)" fill="#a4b860"/><ellipse cx="506" cy="218" rx="4.9" ry="2.7" transform="rotate(170 506 218)" fill="#b4d060"/><ellipse cx="292" cy="231" rx="2.8" ry="1.5" transform="rotate(156 292 231)" fill="#9cc84a"/><ellipse cx="459" cy="111" rx="3.1" ry="1.7" transform="rotate(162 459 111)" fill="#8cc43c"/><ellipse cx="267" cy="195" rx="3.3" ry="1.8" transform="rotate(129 267 195)" fill="#7db834"/><ellipse cx="499" cy="221" rx="3.8" ry="2.1" transform="rotate(99 499 221)" fill="#8cc43c"/><ellipse cx="416" cy="160" rx="3.2" ry="1.7" transform="rotate(156 416 160)" fill="#8cc43c"/><ellipse cx="386" cy="221" rx="3.5" ry="1.9" transform="rotate(142 386 221)" fill="#b4d060"/><ellipse cx="434" cy="236" rx="5.2" ry="2.9" transform="rotate(93 434 236)" fill="#b4d060"/><ellipse cx="367" cy="169" rx="4.2" ry="2.3" transform="rotate(124 367 169)" fill="#a4b860"/><ellipse cx="409" cy="163" rx="3.4" ry="1.9" transform="rotate(131 409 163)" fill="#b4d060"/><ellipse cx="342" cy="170" rx="3.3" ry="1.8" transform="rotate(121 342 170)" fill="#b4d060"/><ellipse cx="352" cy="189" rx="5.4" ry="3.0" transform="rotate(94 352 189)" fill="#9cc84a"/><ellipse cx="357" cy="201" rx="2.8" ry="1.6" transform="rotate(1 357 201)" fill="#b4d060"/><ellipse cx="334" cy="257" rx="4.0" ry="2.2" transform="rotate(72 334 257)" fill="#8cc43c"/><ellipse cx="437" cy="156" rx="2.8" ry="1.5" transform="rotate(30 437 156)" fill="#a4b860"/><ellipse cx="485" cy="193" rx="3.3" ry="1.8" transform="rotate(85 485 193)" fill="#a4b860"/><ellipse cx="465" cy="252" rx="4.1" ry="2.2" transform="rotate(20 465 252)" fill="#a4b860"/><ellipse cx="388" cy="221" rx="2.9" ry="1.6" transform="rotate(140 388 221)" fill="#7db834"/><ellipse cx="457" cy="219" rx="2.5" ry="1.4" transform="rotate(51 457 219)" fill="#9cc84a"/><ellipse cx="395" cy="180" rx="2.8" ry="1.5" transform="rotate(132 395 180)" fill="#a4b860"/><ellipse cx="474" cy="255" rx="4.7" ry="2.6" transform="rotate(126 474 255)" fill="#7db834"/><ellipse cx="418" cy="208" rx="5.0" ry="2.7" transform="rotate(111 418 208)" fill="#a4b860"/><ellipse cx="250" cy="192" rx="4.4" ry="2.4" transform="rotate(95 250 192)" fill="#b4d060"/><ellipse cx="470" cy="162" rx="3.2" ry="1.8" transform="rotate(133 470 162)" fill="#9cc84a"/><ellipse cx="469" cy="119" rx="4.3" ry="2.4" transform="rotate(160 469 119)" fill="#7db834"/><ellipse cx="452" cy="293" rx="5.2" ry="2.8" transform="rotate(24 452 293)" fill="#9cc84a"/><ellipse cx="414" cy="292" rx="3.7" ry="2.0" transform="rotate(78 414 292)" fill="#7db834"/><ellipse cx="498" cy="193" rx="3.1" ry="1.7" transform="rotate(113 498 193)" fill="#9cc84a"/><ellipse cx="416" cy="194" rx="4.5" ry="2.5" transform="rotate(164 416 194)" fill="#b4d060"/><ellipse cx="444" cy="210" rx="4.4" ry="2.4" transform="rotate(62 444 210)" fill="#b4d060"/><ellipse cx="435" cy="163" rx="2.6" ry="1.4" transform="rotate(99 435 163)" fill="#8cc43c"/><ellipse cx="302" cy="209" rx="3.1" ry="1.7" transform="rotate(21 302 209)" fill="#9cc84a"/><ellipse cx="427" cy="240" rx="5.3" ry="2.9" transform="rotate(17 427 240)" fill="#7db834"/><ellipse cx="273" cy="234" rx="3.7" ry="2.0" transform="rotate(77 273 234)" fill="#7db834"/><ellipse cx="371" cy="241" rx="2.5" ry="1.4" transform="rotate(126 371 241)" fill="#7db834"/><ellipse cx="433" cy="190" rx="3.6" ry="2.0" transform="rotate(67 433 190)" fill="#a4b860"/><ellipse cx="501" cy="184" rx="4.0" ry="2.2" transform="rotate(3 501 184)" fill="#8cc43c"/><ellipse cx="518" cy="161" rx="4.2" ry="2.3" transform="rotate(34 518 161)" fill="#a4b860"/><ellipse cx="342" cy="193" rx="3.3" ry="1.8" transform="rotate(21 342 193)" fill="#7db834"/><ellipse cx="403" cy="187" rx="2.9" ry="1.6" transform="rotate(59 403 187)" fill="#a4b860"/><ellipse cx="330" cy="204" rx="4.8" ry="2.6" transform="rotate(73 330 204)" fill="#a4b860"/><ellipse cx="400" cy="197" rx="3.4" ry="1.9" transform="rotate(18 400 197)" fill="#7db834"/><ellipse cx="426" cy="206" rx="5.3" ry="2.9" transform="rotate(120 426 206)" fill="#7db834"/><ellipse cx="343" cy="275" rx="3.0" ry="1.7" transform="rotate(14 343 275)" fill="#b4d060"/><ellipse cx="312" cy="210" rx="4.6" ry="2.5" transform="rotate(137 312 210)" fill="#9cc84a"/><ellipse cx="422" cy="214" rx="2.8" ry="1.6" transform="rotate(43 422 214)" fill="#b4d060"/><ellipse cx="316" cy="235" rx="4.4" ry="2.4" transform="rotate(2 316 235)" fill="#9cc84a"/><ellipse cx="402" cy="253" rx="4.2" ry="2.3" transform="rotate(91 402 253)" fill="#7db834"/><ellipse cx="506" cy="202" rx="4.4" ry="2.4" transform="rotate(146 506 202)" fill="#8cc43c"/><ellipse cx="501" cy="245" rx="3.7" ry="2.0" transform="rotate(169 501 245)" fill="#8cc43c"/><ellipse cx="467" cy="168" rx="2.7" ry="1.5" transform="rotate(170 467 168)" fill="#b4d060"/><ellipse cx="319" cy="243" rx="3.4" ry="1.9" transform="rotate(95 319 243)" fill="#b4d060"/><ellipse cx="342" cy="219" rx="4.5" ry="2.5" transform="rotate(135 342 219)" fill="#7db834"/><ellipse cx="541" cy="229" rx="2.6" ry="1.4" transform="rotate(28 541 229)" fill="#b4d060"/><ellipse cx="407" cy="167" rx="4.7" ry="2.6" transform="rotate(9 407 167)" fill="#7db834"/><ellipse cx="323" cy="238" rx="2.6" ry="1.4" transform="rotate(18 323 238)" fill="#9cc84a"/><ellipse cx="470" cy="117" rx="5.4" ry="3.0" transform="rotate(147 470 117)" fill="#9cc84a"/><ellipse cx="374" cy="201" rx="3.8" ry="2.1" transform="rotate(21 374 201)" fill="#b4d060"/><ellipse cx="453" cy="180" rx="2.9" ry="1.6" transform="rotate(80 453 180)" fill="#9cc84a"/><ellipse cx="361" cy="169" rx="4.4" ry="2.4" transform="rotate(123 361 169)" fill="#7db834"/><ellipse cx="318" cy="275" rx="5.4" ry="2.9" transform="rotate(132 318 275)" fill="#9cc84a"/><ellipse cx="408" cy="239" rx="4.9" ry="2.7" transform="rotate(112 408 239)" fill="#7db834"/><ellipse cx="365" cy="245" rx="4.6" ry="2.5" transform="rotate(34 365 245)" fill="#b4d060"/><ellipse cx="394" cy="250" rx="4.0" ry="2.2" transform="rotate(118 394 250)" fill="#9cc84a"/><ellipse cx="445" cy="284" rx="2.5" ry="1.4" transform="rotate(47 445 284)" fill="#8cc43c"/><ellipse cx="427" cy="217" rx="4.1" ry="2.3" transform="rotate(13 427 217)" fill="#9cc84a"/><ellipse cx="508" cy="252" rx="3.2" ry="1.8" transform="rotate(177 508 252)" fill="#b4d060"/><ellipse cx="331" cy="220" rx="3.5" ry="1.9" transform="rotate(134 331 220)" fill="#7db834"/><ellipse cx="422" cy="199" rx="3.8" ry="2.1" transform="rotate(148 422 199)" fill="#8cc43c"/><ellipse cx="477" cy="145" rx="3.8" ry="2.1" transform="rotate(46 477 145)" fill="#a4b860"/><ellipse cx="433" cy="172" rx="3.5" ry="1.9" transform="rotate(99 433 172)" fill="#b4d060"/><ellipse cx="401" cy="107" rx="4.5" ry="2.5" transform="rotate(105 401 107)" fill="#a4b860"/><ellipse cx="336" cy="225" rx="2.7" ry="1.5" transform="rotate(102 336 225)" fill="#b4d060"/><ellipse cx="284" cy="222" rx="5.0" ry="2.7" transform="rotate(2 284 222)" fill="#7db834"/><ellipse cx="307" cy="170" rx="4.7" ry="2.6" transform="rotate(125 307 170)" fill="#a4b860"/><ellipse cx="396" cy="241" rx="4.5" ry="2.5" transform="rotate(59 396 241)" fill="#7db834"/><ellipse cx="464" cy="191" rx="4.2" ry="2.3" transform="rotate(165 464 191)" fill="#a4b860"/><ellipse cx="272" cy="248" rx="3.9" ry="2.1" transform="rotate(40 272 248)" fill="#7db834"/><ellipse cx="532" cy="199" rx="3.2" ry="1.8" transform="rotate(65 532 199)" fill="#b4d060"/><ellipse cx="355" cy="249" rx="4.3" ry="2.3" transform="rotate(143 355 249)" fill="#a4b860"/><ellipse cx="400" cy="169" rx="4.1" ry="2.3" transform="rotate(151 400 169)" fill="#a4b860"/><ellipse cx="359" cy="204" rx="5.1" ry="2.8" transform="rotate(51 359 204)" fill="#a4b860"/><ellipse cx="500" cy="223" rx="3.0" ry="1.6" transform="rotate(53 500 223)" fill="#b4d060"/><ellipse cx="312" cy="245" rx="4.9" ry="2.7" transform="rotate(15 312 245)" fill="#7db834"/><ellipse cx="519" cy="254" rx="2.8" ry="1.5" transform="rotate(114 519 254)" fill="#7db834"/><ellipse cx="487" cy="277" rx="3.2" ry="1.8" transform="rotate(40 487 277)" fill="#a4b860"/><ellipse cx="414" cy="157" rx="3.7" ry="2.0" transform="rotate(61 414 157)" fill="#a4b860"/><ellipse cx="522" cy="201" rx="4.0" ry="2.2" transform="rotate(145 522 201)" fill="#a4b860"/><ellipse cx="505" cy="244" rx="3.7" ry="2.1" transform="rotate(149 505 244)" fill="#8cc43c"/><ellipse cx="327" cy="134" rx="5.0" ry="2.8" transform="rotate(160 327 134)" fill="#a4b860"/><ellipse cx="515" cy="197" rx="3.6" ry="2.0" transform="rotate(2 515 197)" fill="#b4d060"/><ellipse cx="545" cy="284" rx="3.2" ry="1.8" transform="rotate(29 545 284)" fill="#9cc84a"/><ellipse cx="325" cy="160" rx="3.1" ry="1.7" transform="rotate(76 325 160)" fill="#7db834"/><ellipse cx="469" cy="230" rx="3.4" ry="1.9" transform="rotate(28 469 230)" fill="#8cc43c"/><ellipse cx="405" cy="206" rx="5.2" ry="2.9" transform="rotate(7 405 206)" fill="#a4b860"/><ellipse cx="445" cy="234" rx="4.3" ry="2.3" transform="rotate(108 445 234)" fill="#9cc84a"/><ellipse cx="311" cy="225" rx="3.1" ry="1.7" transform="rotate(51 311 225)" fill="#a4b860"/><ellipse cx="468" cy="286" rx="4.4" ry="2.4" transform="rotate(170 468 286)" fill="#7db834"/><ellipse cx="256" cy="186" rx="5.2" ry="2.8" transform="rotate(165 256 186)" fill="#a4b860"/><ellipse cx="350" cy="266" rx="3.9" ry="2.2" transform="rotate(40 350 266)" fill="#8cc43c"/><ellipse cx="430" cy="170" rx="4.9" ry="2.7" transform="rotate(139 430 170)" fill="#b4d060"/><ellipse cx="411" cy="199" rx="5.2" ry="2.8" transform="rotate(157 411 199)" fill="#9cc84a"/><ellipse cx="477" cy="186" rx="4.6" ry="2.6" transform="rotate(109 477 186)" fill="#9cc84a"/><ellipse cx="431" cy="238" rx="2.9" ry="1.6" transform="rotate(163 431 238)" fill="#7db834"/><ellipse cx="421" cy="191" rx="3.3" ry="1.8" transform="rotate(96 421 191)" fill="#b4d060"/><ellipse cx="485" cy="282" rx="3.1" ry="1.7" transform="rotate(165 485 282)" fill="#8cc43c"/><ellipse cx="430" cy="235" rx="3.3" ry="1.8" transform="rotate(129 430 235)" fill="#7db834"/><ellipse cx="480" cy="246" rx="2.7" ry="1.5" transform="rotate(135 480 246)" fill="#a4b860"/><ellipse cx="314" cy="200" rx="4.9" ry="2.7" transform="rotate(75 314 200)" fill="#8cc43c"/><ellipse cx="435" cy="205" rx="3.1" ry="1.7" transform="rotate(98 435 205)" fill="#a4b860"/><ellipse cx="359" cy="210" rx="3.4" ry="1.9" transform="rotate(73 359 210)" fill="#7db834"/><ellipse cx="390" cy="199" rx="4.6" ry="2.5" transform="rotate(19 390 199)" fill="#8cc43c"/><ellipse cx="335" cy="248" rx="4.5" ry="2.5" transform="rotate(2 335 248)" fill="#8cc43c"/><ellipse cx="315" cy="268" rx="3.4" ry="1.9" transform="rotate(20 315 268)" fill="#9cc84a"/><ellipse cx="427" cy="121" rx="5.2" ry="2.9" transform="rotate(27 427 121)" fill="#9cc84a"/><ellipse cx="274" cy="134" rx="5.4" ry="2.9" transform="rotate(136 274 134)" fill="#7db834"/><ellipse cx="373" cy="208" rx="3.1" ry="1.7" transform="rotate(132 373 208)" fill="#9cc84a"/><ellipse cx="287" cy="185" rx="3.8" ry="2.1" transform="rotate(69 287 185)" fill="#7db834"/><ellipse cx="494" cy="255" rx="4.5" ry="2.5" transform="rotate(127 494 255)" fill="#9cc84a"/><ellipse cx="440" cy="259" rx="4.3" ry="2.4" transform="rotate(16 440 259)" fill="#a4b860"/><ellipse cx="412" cy="243" rx="3.8" ry="2.1" transform="rotate(139 412 243)" fill="#8cc43c"/><ellipse cx="324" cy="290" rx="2.9" ry="1.6" transform="rotate(37 324 290)" fill="#b4d060"/><ellipse cx="478" cy="274" rx="3.5" ry="1.9" transform="rotate(74 478 274)" fill="#a4b860"/><ellipse cx="486" cy="220" rx="5.4" ry="3.0" transform="rotate(142 486 220)" fill="#7db834"/><ellipse cx="346" cy="159" rx="3.3" ry="1.8" transform="rotate(34 346 159)" fill="#8cc43c"/><ellipse cx="375" cy="264" rx="3.6" ry="2.0" transform="rotate(92 375 264)" fill="#b4d060"/><ellipse cx="441" cy="128" rx="4.6" ry="2.6" transform="rotate(46 441 128)" fill="#b4d060"/><ellipse cx="340" cy="205" rx="3.6" ry="2.0" transform="rotate(90 340 205)" fill="#9cc84a"/><ellipse cx="485" cy="274" rx="5.5" ry="3.0" transform="rotate(127 485 274)" fill="#b4d060"/><ellipse cx="500" cy="191" rx="4.4" ry="2.4" transform="rotate(36 500 191)" fill="#8cc43c"/><ellipse cx="457" cy="233" rx="3.8" ry="2.1" transform="rotate(60 457 233)" fill="#b4d060"/><ellipse cx="541" cy="268" rx="3.9" ry="2.1" transform="rotate(22 541 268)" fill="#7db834"/><ellipse cx="448" cy="211" rx="4.1" ry="2.3" transform="rotate(101 448 211)" fill="#b4d060"/><ellipse cx="347" cy="201" rx="4.3" ry="2.4" transform="rotate(22 347 201)" fill="#7db834"/><ellipse cx="435" cy="180" rx="3.2" ry="1.8" transform="rotate(103 435 180)" fill="#7db834"/><ellipse cx="430" cy="188" rx="4.9" ry="2.7" transform="rotate(82 430 188)" fill="#b4d060"/><ellipse cx="290" cy="263" rx="3.4" ry="1.9" transform="rotate(121 290 263)" fill="#9cc84a"/><ellipse cx="399" cy="168" rx="4.4" ry="2.4" transform="rotate(137 399 168)" fill="#b4d060"/><ellipse cx="450" cy="257" rx="2.9" ry="1.6" transform="rotate(70 450 257)" fill="#8cc43c"/><ellipse cx="360" cy="202" rx="2.9" ry="1.6" transform="rotate(44 360 202)" fill="#b4d060"/><ellipse cx="429" cy="208" rx="4.7" ry="2.6" transform="rotate(142 429 208)" fill="#8cc43c"/><ellipse cx="328" cy="247" rx="3.9" ry="2.2" transform="rotate(74 328 247)" fill="#8cc43c"/><ellipse cx="318" cy="163" rx="4.8" ry="2.6" transform="rotate(87 318 163)" fill="#a4b860"/><ellipse cx="455" cy="176" rx="2.9" ry="1.6" transform="rotate(21 455 176)" fill="#a4b860"/><ellipse cx="471" cy="199" rx="3.8" ry="2.1" transform="rotate(163 471 199)" fill="#b4d060"/><ellipse cx="393" cy="230" rx="5.2" ry="2.9" transform="rotate(132 393 230)" fill="#b4d060"/><ellipse cx="296" cy="169" rx="5.1" ry="2.8" transform="rotate(158 296 169)" fill="#7db834"/><ellipse cx="495" cy="206" rx="4.1" ry="2.2" transform="rotate(43 495 206)" fill="#8cc43c"/><ellipse cx="377" cy="260" rx="5.1" ry="2.8" transform="rotate(180 377 260)" fill="#9cc84a"/><ellipse cx="385" cy="118" rx="5.1" ry="2.8" transform="rotate(76 385 118)" fill="#7db834"/><ellipse cx="424" cy="183" rx="4.2" ry="2.3" transform="rotate(163 424 183)" fill="#a4b860"/><ellipse cx="521" cy="264" rx="5.1" ry="2.8" transform="rotate(104 521 264)" fill="#8cc43c"/><ellipse cx="341" cy="227" rx="2.6" ry="1.4" transform="rotate(31 341 227)" fill="#7db834"/><ellipse cx="324" cy="234" rx="3.7" ry="2.0" transform="rotate(64 324 234)" fill="#b4d060"/><ellipse cx="384" cy="207" rx="3.9" ry="2.1" transform="rotate(56 384 207)" fill="#8cc43c"/><ellipse cx="385" cy="239" rx="5.1" ry="2.8" transform="rotate(36 385 239)" fill="#a4b860"/><ellipse cx="483" cy="158" rx="3.1" ry="1.7" transform="rotate(151 483 158)" fill="#8cc43c"/><ellipse cx="350" cy="258" rx="4.4" ry="2.4" transform="rotate(126 350 258)" fill="#9cc84a"/><ellipse cx="313" cy="193" rx="3.1" ry="1.7" transform="rotate(158 313 193)" fill="#9cc84a"/><ellipse cx="441" cy="222" rx="5.4" ry="3.0" transform="rotate(49 441 222)" fill="#7db834"/><ellipse cx="261" cy="262" rx="4.6" ry="2.5" transform="rotate(169 261 262)" fill="#7db834"/><ellipse cx="374" cy="222" rx="5.1" ry="2.8" transform="rotate(22 374 222)" fill="#9cc84a"/><ellipse cx="382" cy="180" rx="4.0" ry="2.2" transform="rotate(53 382 180)" fill="#9cc84a"/><ellipse cx="366" cy="211" rx="3.2" ry="1.8" transform="rotate(54 366 211)" fill="#b4d060"/><ellipse cx="511" cy="183" rx="2.9" ry="1.6" transform="rotate(120 511 183)" fill="#7db834"/><ellipse cx="374" cy="219" rx="2.7" ry="1.5" transform="rotate(163 374 219)" fill="#b4d060"/><ellipse cx="511" cy="218" rx="3.3" ry="1.8" transform="rotate(145 511 218)" fill="#b4d060"/><ellipse cx="461" cy="235" rx="3.2" ry="1.8" transform="rotate(50 461 235)" fill="#9cc84a"/><ellipse cx="356" cy="206" rx="5.5" ry="3.0" transform="rotate(6 356 206)" fill="#9cc84a"/><ellipse cx="276" cy="234" rx="2.5" ry="1.4" transform="rotate(160 276 234)" fill="#a4b860"/></g><path d="M267 225 Q257 131 290 38" stroke="#90b858" stroke-width="1.1" fill="none" opacity=".3"/><path d="M390 223 Q398 135 374 47" stroke="#90b858" stroke-width="1.1" fill="none" opacity=".3"/><path d="M535 280 Q551 208 538 136" stroke="#90b858" stroke-width="1.1" fill="none" opacity=".3"/><path d="M283 255 Q268 186 296 118" stroke="#90b858" stroke-width="1.1" fill="none" opacity=".3"/><path d="M458 278 Q479 210 438 142" stroke="#90b858" stroke-width="1.1" fill="none" opacity=".3"/><path d="M425 241 Q398 143 401 45" stroke="#90b858" stroke-width="1.1" fill="none" opacity=".3"/><path d="M380 290 Q387 218 366 145" stroke="#90b858" stroke-width="1.1" fill="none" opacity=".3"/><path d="M484 260 Q456 170 502 80" stroke="#90b858" stroke-width="1.1" fill="none" opacity=".3"/><path d="M283 234 Q296 164 294 93" stroke="#90b858" stroke-width="1.1" fill="none" opacity=".3"/><path d="M431 224 Q450 146 425 67" stroke="#90b858" stroke-width="1.1" fill="none" opacity=".3"/><path d="M464 282 Q473 218 485 153" stroke="#90b858" stroke-width="1.1" fill="none" opacity=".3"/><path d="M398 250 Q408 186 378 121" stroke="#90b858" stroke-width="1.1" fill="none" opacity=".3"/><path d="M423 256 Q435 194 408 131" stroke="#90b858" stroke-width="1.1" fill="none" opacity=".3"/><path d="M454 297 Q460 214 424 131" stroke="#90b858" stroke-width="1.1" fill="none" opacity=".3"/><path d="M289 280 Q259 181 291 82" stroke="#90b858" stroke-width="1.1" fill="none" opacity=".3"/><path d="M369 262 Q367 193 336 124" stroke="#90b858" stroke-width="1.1" fill="none" opacity=".3"/><path d="M521 298 Q550 218 536 137" stroke="#90b858" stroke-width="1.1" fill="none" opacity=".3"/><path d="M428 244 Q423 154 397 64" stroke="#90b858" stroke-width="1.1" fill="none" opacity=".3"/><path d="M275 238 Q300 142 260 46" stroke="#90b858" stroke-width="1.1" fill="none" opacity=".3"/><path d="M313 233 Q328 133 320 34" stroke="#90b858" stroke-width="1.1" fill="none" opacity=".3"/><g filter="url(#tb3)"><path d="M150 302 C250 294 420 298 570 292 L570 330 L150 330Z" fill="#1c1c18"/></g><clipPath id="trc"><path d="M80 318 C80 288 98 262 127 260 C156 262 172 288 174 318Z"/></clipPath><g filter="url(#tb1)" clip-path="url(#trc)"><rect x="80" y="255" width="95" height="65" fill="#b4af98"/><g><ellipse cx="108" cy="262" rx="7.2" ry="5.6" fill="#4e4a3a"/><ellipse cx="122" cy="262" rx="7.2" ry="5.6" fill="#4e4a3a"/><ellipse cx="136" cy="262" rx="7.2" ry="5.6" fill="#4e4a3a"/><ellipse cx="101" cy="274" rx="7.2" ry="5.6" fill="#4e4a3a"/><ellipse cx="115" cy="274" rx="7.2" ry="5.6" fill="#4e4a3a"/><ellipse cx="129" cy="274" rx="7.2" ry="5.6" fill="#4e4a3a"/><ellipse cx="143" cy="274" rx="7.2" ry="5.6" fill="#4e4a3a"/><ellipse cx="157" cy="274" rx="7.2" ry="5.6" fill="#4e4a3a"/><ellipse cx="94" cy="286" rx="7.2" ry="5.6" fill="#4e4a3a"/><ellipse cx="108" cy="286" rx="7.2" ry="5.6" fill="#4e4a3a"/><ellipse cx="122" cy="286" rx="7.2" ry="5.6" fill="#4e4a3a"/><ellipse cx="136" cy="286" rx="7.2" ry="5.6" fill="#4e4a3a"/><ellipse cx="150" cy="286" rx="7.2" ry="5.6" fill="#4e4a3a"/><ellipse cx="164" cy="286" rx="7.2" ry="5.6" fill="#4e4a3a"/><ellipse cx="87" cy="298" rx="7.2" ry="5.6" fill="#4e4a3a"/><ellipse cx="101" cy="298" rx="7.2" ry="5.6" fill="#4e4a3a"/><ellipse cx="115" cy="298" rx="7.2" ry="5.6" fill="#4e4a3a"/><ellipse cx="129" cy="298" rx="7.2" ry="5.6" fill="#4e4a3a"/><ellipse cx="143" cy="298" rx="7.2" ry="5.6" fill="#4e4a3a"/><ellipse cx="157" cy="298" rx="7.2" ry="5.6" fill="#4e4a3a"/><ellipse cx="171" cy="298" rx="7.2" ry="5.6" fill="#4e4a3a"/><ellipse cx="94" cy="310" rx="7.2" ry="5.6" fill="#4e4a3a"/><ellipse cx="108" cy="310" rx="7.2" ry="5.6" fill="#4e4a3a"/><ellipse cx="122" cy="310" rx="7.2" ry="5.6" fill="#4e4a3a"/><ellipse cx="136" cy="310" rx="7.2" ry="5.6" fill="#4e4a3a"/><ellipse cx="150" cy="310" rx="7.2" ry="5.6" fill="#4e4a3a"/><ellipse cx="164" cy="310" rx="7.2" ry="5.6" fill="#4e4a3a"/></g></g><g filter="url(#tb1)"><g transform="translate(303.5 82.0) rotate(-24.0)"><ellipse cx="0" cy="1.9" rx="34.5" ry="9.3" fill="#34424e" opacity=".8"/><path d="M-34.5 3.7 Q-6.9 6.5 3.4 2.8 L-3.4 -0.9 Q-20.7 -0.9 -34.5 0.9Z" fill="#c81e30"/><path d="M-17.2 -0.4 Q6.9 -6.0 32.4 -2.2" stroke="#4f8cff" stroke-width="3.7" fill="none" stroke-linecap="round"/></g><g transform="translate(220.0 115.0) rotate(-4.6)"><ellipse cx="0" cy="1.4" rx="25.1" ry="6.8" fill="#34424e" opacity=".8"/><path d="M-25.1 2.7 Q-5.0 4.7 2.5 2.0 L-2.5 -0.7 Q-15.0 -0.7 -25.1 0.7Z" fill="#c81e30"/><path d="M-12.5 -0.3 Q5.0 -4.3 23.6 -1.6" stroke="#4f8cff" stroke-width="2.7" fill="none" stroke-linecap="round"/></g><g transform="translate(87.5 219.0) rotate(156.9)"><ellipse cx="0" cy="1.8" rx="33.2" ry="9.0" fill="#34424e" opacity=".8"/><path d="M-33.2 3.6 Q-6.6 6.3 3.3 2.7 L-3.3 -0.9 Q-19.9 -0.9 -33.2 0.9Z" fill="#c81e30"/><path d="M-16.6 -0.4 Q6.6 -5.7 31.2 -2.1" stroke="#4f8cff" stroke-width="3.6" fill="none" stroke-linecap="round"/></g><g transform="translate(215.0 259.0) rotate(14.4)"><ellipse cx="0" cy="2.0" rx="36.1" ry="9.8" fill="#34424e" opacity=".8"/><path d="M-36.1 3.9 Q-7.2 6.8 3.6 2.9 L-3.6 -1.0 Q-21.7 -1.0 -36.1 1.0Z" fill="#c81e30"/><path d="M-18.1 -0.4 Q7.2 -6.2 34.0 -2.3" stroke="#4f8cff" stroke-width="3.9" fill="none" stroke-linecap="round"/></g><g transform="translate(448.0 211.0) rotate(150.8)"><ellipse cx="0" cy="1.5" rx="28.7" ry="7.7" fill="#34424e" opacity=".8"/><path d="M-28.7 3.1 Q-5.7 5.4 2.9 2.3 L-2.9 -0.8 Q-17.2 -0.8 -28.7 0.8Z" fill="#c81e30"/><path d="M-14.3 -0.3 Q5.7 -5.0 26.9 -1.9" stroke="#4f8cff" stroke-width="3.1" fill="none" stroke-linecap="round"/></g><g transform="translate(525.5 54.5) rotate(160.9)"><ellipse cx="0" cy="1.6" rx="29.1" ry="7.9" fill="#34424e" opacity=".8"/><path d="M-29.1 3.1 Q-5.8 5.5 2.9 2.4 L-2.9 -0.8 Q-17.5 -0.8 -29.1 0.8Z" fill="#c81e30"/><path d="M-14.5 -0.3 Q5.8 -5.0 27.3 -1.9" stroke="#4f8cff" stroke-width="3.1" fill="none" stroke-linecap="round"/></g></g></svg></div>
<div class="a" style="left:546px;top:671px;width:183px;height:120px;border-radius:8px;overflow:hidden"><svg width="183" height="120"><defs><radialGradient id="bl1" cx=".42" cy=".95" r=".6"><stop offset="0" stop-color="#3b93da"/><stop offset=".6" stop-color="#2a78c8" stop-opacity=".6"/><stop offset="1" stop-color="#2a78c8" stop-opacity="0"/></radialGradient><radialGradient id="bl2" cx="1" cy="1" r=".45"><stop offset="0" stop-color="#1b2fa5"/><stop offset="1" stop-color="#1b2fa5" stop-opacity="0"/></radialGradient><linearGradient id="bl0" x1="0" y1="0" x2="0" y2="1"><stop offset="0" stop-color="#0b559f"/><stop offset=".45" stop-color="#1559ac"/><stop offset="1" stop-color="#1f6cc2"/></linearGradient></defs><rect width="183" height="120" fill="url(#bl0)"/><rect width="183" height="120" fill="url(#bl1)"/><rect width="183" height="120" fill="url(#bl2)"/><path d="M-10 -5 C30 90 -20 40 -30 60" stroke="#7fb8f0" stroke-width=".5" fill="none" opacity=".35"/><path d="M-7 -5 C33 88 -18 42 -30 63" stroke="#7fb8f0" stroke-width=".5" fill="none" opacity=".35"/><path d="M-4 -5 C36 86 -16 44 -30 66" stroke="#7fb8f0" stroke-width=".5" fill="none" opacity=".35"/><path d="M-1 -5 C39 84 -14 46 -30 69" stroke="#7fb8f0" stroke-width=".5" fill="none" opacity=".35"/><path d="M2 -5 C42 82 -12 48 -30 72" stroke="#7fb8f0" stroke-width=".5" fill="none" opacity=".35"/><path d="M5 -5 C45 80 -10 50 -30 75" stroke="#7fb8f0" stroke-width=".5" fill="none" opacity=".35"/><path d="M8 -5 C48 78 -8 52 -30 78" stroke="#7fb8f0" stroke-width=".5" fill="none" opacity=".35"/><path d="M11 -5 C51 76 -6 54 -30 81" stroke="#7fb8f0" stroke-width=".5" fill="none" opacity=".35"/><path d="M14 -5 C54 74 -4 56 -30 84" stroke="#7fb8f0" stroke-width=".5" fill="none" opacity=".35"/><path d="M17 -5 C57 72 -2 58 -30 87" stroke="#7fb8f0" stroke-width=".5" fill="none" opacity=".35"/><path d="M20 -5 C60 70 0 60 -30 90" stroke="#7fb8f0" stroke-width=".5" fill="none" opacity=".35"/><path d="M23 -5 C63 68 2 62 -30 93" stroke="#7fb8f0" stroke-width=".5" fill="none" opacity=".35"/><path d="M26 -5 C66 66 4 64 -30 96" stroke="#7fb8f0" stroke-width=".5" fill="none" opacity=".35"/><path d="M29 -5 C69 64 6 66 -30 99" stroke="#7fb8f0" stroke-width=".5" fill="none" opacity=".35"/><path d="M200 20 C150 40 110 100 150 140" stroke="#7fb8f0" stroke-width=".5" fill="none" opacity=".3"/><path d="M200 26 C148 45 113 103 152 140" stroke="#7fb8f0" stroke-width=".5" fill="none" opacity=".3"/><path d="M200 32 C146 50 116 106 154 140" stroke="#7fb8f0" stroke-width=".5" fill="none" opacity=".3"/><path d="M200 38 C144 55 119 109 156 140" stroke="#7fb8f0" stroke-width=".5" fill="none" opacity=".3"/><path d="M200 44 C142 60 122 112 158 140" stroke="#7fb8f0" stroke-width=".5" fill="none" opacity=".3"/><path d="M200 50 C140 65 125 115 160 140" stroke="#7fb8f0" stroke-width=".5" fill="none" opacity=".3"/><path d="M200 56 C138 70 128 118 162 140" stroke="#7fb8f0" stroke-width=".5" fill="none" opacity=".3"/><path d="M200 62 C136 75 131 121 164 140" stroke="#7fb8f0" stroke-width=".5" fill="none" opacity=".3"/><path d="M200 68 C134 80 134 124 166 140" stroke="#7fb8f0" stroke-width=".5" fill="none" opacity=".3"/><path d="M200 74 C132 85 137 127 168 140" stroke="#7fb8f0" stroke-width=".5" fill="none" opacity=".3"/><path d="M200 80 C130 90 140 130 170 140" stroke="#7fb8f0" stroke-width=".5" fill="none" opacity=".3"/><path d="M200 86 C128 95 143 133 172 140" stroke="#7fb8f0" stroke-width=".5" fill="none" opacity=".3"/><path d="M200 92 C126 100 146 136 174 140" stroke="#7fb8f0" stroke-width=".5" fill="none" opacity=".3"/><path d="M200 98 C124 105 149 139 176 140" stroke="#7fb8f0" stroke-width=".5" fill="none" opacity=".3"/></svg></div>
<svg class="a" style="left:846px;top:688px;" width="16" height="20" viewBox="0 0 16 20"><path d="M8 2 V14 M4 10.5 L8 14.5 L12 10.5 M1.5 18 H14.5" fill="none" stroke="#8a8a8a" stroke-width="1.2"/></svg>
<div class="a" style="left:753px;top:715px;width:201px;text-align:center;font-size:12.3px;line-height:17.5px;color:#2b2b2b;white-space:normal;padding:0 16px">Drop or <span style="color:#1f80d8">select</span> an image (Max 10 MB)</div>
<div class="a " style="left:1020.0px;top:245.9px;font-size:15.5px;line-height:15.5px;color:#232323;font-weight:700;">Configuration</div>
<div class="a " style="left:1020.0px;top:281.6px;font-size:12.3px;line-height:12.3px;color:#555;font-weight:400;">Player</div>
<div class="a" style="left:1020px;top:303px;width:394px;height:40px;border:1px solid #bfbfbf;border-radius:5px"></div>
<div class="a " style="left:1033.2px;top:316.3px;font-size:14px;line-height:14px;color:#2b2b2b;font-weight:400;">Default Player</div>
<svg class="a" style="left:1388px;top:320px;" width="12" height="8" viewBox="0 0 12 8"><path d="M1 1 L6 6 L11 1" fill="none" stroke="#555" stroke-width="1.3"/></svg>
<div class="a " style="left:1020.4px;top:357.8px;font-size:12.4px;line-height:12.4px;color:#555;font-weight:400;">Validity</div>
<div class="a" style="left:1020px;top:379px;width:394px;height:40px;border:1px solid #bfbfbf;border-radius:5px"></div>
<div class="a " style="left:1033.1px;top:391.8px;font-size:14.7px;line-height:14.7px;color:#2b2b2b;font-weight:400;">Unlimited</div>
<svg class="a" style="left:1388px;top:396px;" width="12" height="8" viewBox="0 0 12 8"><path d="M1 1 L6 6 L11 1" fill="none" stroke="#555" stroke-width="1.3"/></svg>
<div class="a" style="left:1020px;top:431px;width:394px;height:100px;border:1px solid #bfbfbf;border-radius:5px"></div>
<div class="a " style="left:1033.1px;top:444.8px;font-size:14.7px;line-height:14.7px;color:#b5b5b5;font-weight:400;">Comment</div>
<svg class="a" style="left:1405px;top:520px;" width="9" height="9" viewBox="0 0 9 9"><path d="M8 1 L1 8 M8 5 L5 8" stroke="#888" stroke-width="1"/></svg>
<div class="a" style="left:1006px;top:537px;width:224px;height:65px;background:#fff;border-radius:12px"></div>
<div class="a " style="left:1020.0px;top:544.6px;font-size:15.8px;line-height:15.8px;color:#222;font-weight:700;">Integration mode</div>
<div class="a" style="left:1020px;top:574px;width:20px;height:20px;border:2px solid #6b6b6b;border-radius:50%"></div>
<div class="a " style="left:1048.5px;top:577.5px;font-size:14.2px;line-height:14.2px;color:#555;font-weight:400;">Responsive</div>
<div class="a" style="left:1139px;top:574px;width:20px;height:20px;border:2px solid #0a8cf0;border-radius:50%"></div>
<div class="a" style="left:1144px;top:579px;width:10px;height:10px;background:#0a8cf0;border-radius:50%"></div>
<div class="a " style="left:1167.7px;top:577.5px;font-size:14.2px;line-height:14.2px;color:#555;font-weight:400;">Fixed</div>
<div class="a" style="left:1020px;top:619px;width:165px;height:39px;border:1px solid #bfbfbf;border-radius:5px"></div>
<div class="a " style="left:1032.5px;top:631.1px;font-size:14px;line-height:14px;color:#2b2b2b;font-weight:400;">16:9</div>
<svg class="a" style="left:1159px;top:635px;" width="12" height="8" viewBox="0 0 12 8"><path d="M1 1 L6 6 L11 1" fill="none" stroke="#555" stroke-width="1.3"/></svg>
<div class="a" style="left:1201px;top:619px;width:120px;height:40px;border:1px solid #bfbfbf;border-radius:6px"></div>
<div class="a" style="left:1208px;top:615px;width:43px;height:8px;background:#d5d5d5"></div>
<div class="a " style="left:1213.0px;top:612.4px;font-size:12.3px;line-height:12.3px;color:#555;font-weight:400;">Width</div>
<div class="a " style="left:1213.0px;top:631.5px;font-size:17.5px;line-height:17.5px;color:#2b2b2b;font-weight:400;">560</div>
<div class="a " style="left:1291.7px;top:630.0px;font-size:16.5px;line-height:16.5px;color:#2b2b2b;font-weight:400;">px</div>
<svg class="a" style="left:1336px;top:630px;" width="18" height="13" viewBox="0 0 18 13"><path d="M6.5 2.5 H4.5 a4 4 0 0 0 0 8 H6.5 M11.5 2.5 H13.5 a4 4 0 0 1 0 8 H11.5 M5.5 6.5 H12.5" fill="none" stroke="#2b2b2b" stroke-width="1.5" stroke-linecap="round"/></svg>
<div class="a" style="left:1020px;top:674px;width:120px;height:41px;border:1px solid #bfbfbf;border-radius:6px"></div>
<div class="a" style="left:1027px;top:670px;width:47px;height:8px;background:#d5d5d5"></div>
<div class="a " style="left:1032.2px;top:668.5px;font-size:12.5px;line-height:12.5px;color:#555;font-weight:400;">Height</div>
<div class="a " style="left:1032.2px;top:688.7px;font-size:16.2px;line-height:16.2px;color:#2b2b2b;font-weight:400;">315</div>
<div class="a " style="left:1110.3px;top:686.7px;font-size:16.5px;line-height:16.5px;color:#2b2b2b;font-weight:400;">px</div>
<div class="a " style="left:1020.4px;top:745.0px;font-size:15.5px;line-height:15.5px;color:#232323;font-weight:700;">Options</div>
<div class="a" style="left:1020px;top:775px;width:16px;height:16px;border:2px solid #5e5e5e;border-radius:2px"></div>
<div class="a " style="left:1044.4px;top:775.8px;font-size:14px;line-height:14px;color:#444;font-weight:400;">Start at</div>
<div class="a" style="left:1103px;top:762px;width:95px;height:41px;border:1px solid #bfbfbf;border-radius:6px"></div>
<div class="a " style="left:1115.2px;top:774.2px;font-size:16px;line-height:16px;color:#8a8a8a;font-weight:400;letter-spacing:1px">00:00:00</div>
<div class="a" style="left:1020px;top:823px;width:394px;height:42px;border:1.5px solid #2a8ee0;border-radius:6px"></div>
<div class="a " style="left:1120.9px;top:835.2px;font-size:14.5px;line-height:14.5px;color:#1f80d8;font-weight:400;">Generate the integration code</div>
</div>
</body></html>
